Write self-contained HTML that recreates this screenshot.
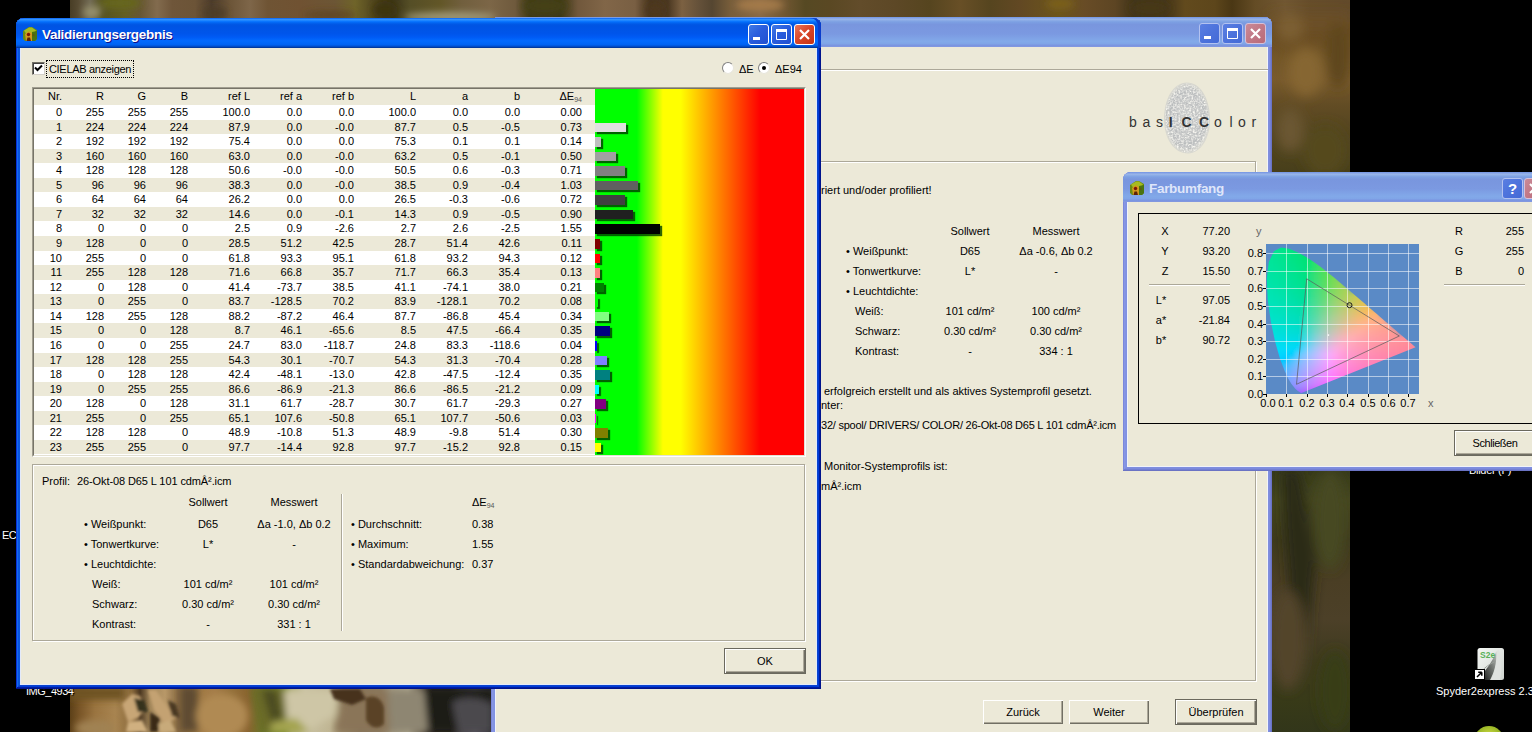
<!DOCTYPE html>
<html lang="de"><head><meta charset="utf-8"><title>Validierungsergebnis</title>
<style>
html,body{margin:0;padding:0}
body{width:1532px;height:732px;overflow:hidden;background:#000;position:relative;font-family:"Liberation Sans","DejaVu Sans",sans-serif;font-size:11px;color:#000;line-height:14px}
.abs{position:absolute}
div{box-sizing:border-box}
.t{position:absolute;white-space:nowrap;line-height:14px;height:14px}
.tc{position:absolute;white-space:nowrap;line-height:14px;height:14px;width:120px;text-align:center}
.c{position:absolute;width:60px;text-align:right;white-space:nowrap;line-height:16px;height:16px}
.sub{font-size:7px;color:#555;position:relative;top:2px}
.bar{box-shadow:2px 2px 1px rgba(0,60,0,.8)}
.win{position:absolute;background:#ece9d8;border-radius:8px 8px 0 0}
.win.act{box-shadow:inset -1px -1px #00138c,inset 1px 1px #0831d9,inset -2px -2px #001ea0,inset 2px 2px #166aee,inset -3px -3px #003bda,inset 3px 3px #0855dd,inset -4px -4px #0a44cf,inset 4px 4px #0b57e2,inset -5px -5px #e3eafb,inset 5px 0 #e3eafb}
.win.ina{box-shadow:inset -1px -1px #6a73c4,inset 1px 1px #7b88dc,inset -2px -2px #737fd3,inset 2px 2px #8796e4,inset -3px -3px #7d8bdd,inset 3px 3px #8393e2,inset -4px -4px #7f8ede,inset 4px 4px #8192e2,inset -5px -5px #f1f3fa,inset 5px 0 #f1f3fa}
.tb{position:absolute;left:0;top:0;right:0;height:30px;border-radius:8px 8px 0 0}
.act .tb{background:linear-gradient(180deg,#0058ee 0%,#3593ff 4%,#288eff 7%,#127dff 10%,#036ffc 13%,#0262ee 17%,#0057e5 22%,#0054e3 26%,#0055eb 52%,#005bf5 64%,#026afe 76%,#0064f4 88%,#0052d6 94%,#0040ab 97%,#003092 100%)}
.act .tb{box-shadow:inset -3px 0 0 #0a3ccc}
.ina .tb{background:linear-gradient(180deg,#7697e7,#7e9ee3 3%,#94afe8 6%,#97b4e9 8%,#82a5e4 14%,#7c9fe2 17%,#7996de 25%,#7b99e1 56%,#82a9e9 81%,#80a5e7 89%,#7b96e1 94%,#7a93df 97%,#8a9ce0)}
.ttl{position:absolute;top:9px;font-weight:bold;font-size:13.5px;line-height:16px;color:#fff;white-space:nowrap;text-shadow:1px 1px #0f1089;letter-spacing:-.3px}
.ina .ttl{color:#dfe6fa;text-shadow:none}
.wb{position:absolute;width:21px;height:21px;border:1px solid #fff;border-radius:3px;background:linear-gradient(135deg,#3f7ae6 0%,#2a5ddd 45%,#2150d0 100%)}
.wb.x{background:linear-gradient(135deg,#e9765a 0%,#d9472a 45%,#c43214 100%)}
.ina .wb{border-color:#b3c2f0;background:linear-gradient(135deg,#5a7fe2 0%,#4d73dc 50%,#446ad6 100%)}
.ina .wb.x{background:linear-gradient(135deg,#c98a98 0%,#c17886 50%,#b96a78 100%);border-color:#d6c0d8}
.wb svg{position:absolute;left:0;top:0}
.btn{position:absolute;background:#ece9d8;box-shadow:inset 1px 1px 0 #fff,inset -1px -1px 0 #716f64,inset -2px -2px 0 #aca899;text-align:center;line-height:24px;height:24px;width:80px}
.btn.def{border:1px solid #6b695e;box-shadow:inset 1px 1px 0 #fff,inset -1px -1px 0 #716f64,inset -2px -2px 0 #aca899;line-height:24px;height:26px;width:82px}
.grp{position:absolute;border:1px solid #aca899;box-shadow:1px 1px 0 #fff,inset 1px 1px 0 #fff}
.dl{position:absolute;color:#fff;white-space:nowrap;line-height:14px;text-shadow:1px 1px 1px #000}
.tk{line-height:14px;white-space:nowrap;font-size:11px}
</style></head><body>

<!-- ===== desktop photo ===== -->
<svg class="abs" style="left:70px;top:0" width="1280" height="732" viewBox="70 0 1280 732">
<defs><linearGradient id="gT" gradientUnits="userSpaceOnUse" x1="70" y1="0" x2="1350" y2="0"><stop offset="0.0000" stop-color="#483d25"/><stop offset="0.0063" stop-color="#564a32"/><stop offset="0.0156" stop-color="#716a54"/><stop offset="0.0250" stop-color="#555120"/><stop offset="0.0430" stop-color="#635e24"/><stop offset="0.0547" stop-color="#675635"/><stop offset="0.0680" stop-color="#826b4e"/><stop offset="0.0797" stop-color="#6f563a"/><stop offset="0.0977" stop-color="#6c5437"/><stop offset="0.1109" stop-color="#4c3c2b"/><stop offset="0.1250" stop-color="#6c5538"/><stop offset="0.1406" stop-color="#7e6649"/><stop offset="0.1547" stop-color="#6f5434"/><stop offset="0.1797" stop-color="#705232"/><stop offset="0.2070" stop-color="#6c5635"/><stop offset="0.2227" stop-color="#6f6429"/><stop offset="0.2422" stop-color="#483d1b"/><stop offset="0.2516" stop-color="#3b3418"/><stop offset="0.2656" stop-color="#554e26"/><stop offset="0.2891" stop-color="#625627"/><stop offset="0.3063" stop-color="#715f3e"/><stop offset="0.3281" stop-color="#7c6647"/><stop offset="0.3477" stop-color="#6f5a3d"/><stop offset="0.3594" stop-color="#3e3916"/><stop offset="0.3828" stop-color="#3b3715"/><stop offset="0.3969" stop-color="#71583c"/><stop offset="0.4180" stop-color="#816648"/><stop offset="0.4414" stop-color="#795f43"/><stop offset="0.4531" stop-color="#48351e"/><stop offset="0.4672" stop-color="#4b3821"/><stop offset="0.4781" stop-color="#7c6142"/><stop offset="0.4922" stop-color="#635039"/><stop offset="0.5016" stop-color="#554631"/><stop offset="0.5156" stop-color="#775d3a"/><stop offset="0.5391" stop-color="#876845"/><stop offset="0.5586" stop-color="#6f5631"/><stop offset="0.5742" stop-color="#564923"/><stop offset="0.5938" stop-color="#5a4823"/><stop offset="0.6172" stop-color="#624c2a"/><stop offset="0.6445" stop-color="#5d4826"/><stop offset="0.6719" stop-color="#56451f"/><stop offset="0.6953" stop-color="#684f26"/><stop offset="0.7188" stop-color="#56451f"/><stop offset="0.7422" stop-color="#624823"/><stop offset="0.7719" stop-color="#6c551c"/><stop offset="0.7930" stop-color="#684c26"/><stop offset="0.8164" stop-color="#5d4523"/><stop offset="0.8320" stop-color="#403419"/><stop offset="0.8555" stop-color="#443519"/><stop offset="0.8711" stop-color="#624a1d"/><stop offset="0.8945" stop-color="#5d461b"/><stop offset="0.9078" stop-color="#4a3714"/><stop offset="0.9258" stop-color="#644c25"/><stop offset="0.9492" stop-color="#715732"/><stop offset="0.9688" stop-color="#664d2a"/><stop offset="1.0000" stop-color="#624a2a"/></linearGradient><linearGradient id="gB" gradientUnits="userSpaceOnUse" x1="70" y1="0" x2="495" y2="0"><stop offset="0.0000" stop-color="#5c4018"/><stop offset="0.0235" stop-color="#7a5628"/><stop offset="0.0588" stop-color="#9a7440"/><stop offset="0.1059" stop-color="#a88450"/><stop offset="0.1459" stop-color="#8a6a3c"/><stop offset="0.1647" stop-color="#4a3620"/><stop offset="0.1882" stop-color="#a08458"/><stop offset="0.2235" stop-color="#b89868"/><stop offset="0.2541" stop-color="#8a6c44"/><stop offset="0.2824" stop-color="#a07a44"/><stop offset="0.3412" stop-color="#a47c48"/><stop offset="0.3812" stop-color="#94703a"/><stop offset="0.4188" stop-color="#8a6430"/><stop offset="0.4518" stop-color="#6a7428"/><stop offset="0.5035" stop-color="#7a8a30"/><stop offset="0.5224" stop-color="#a8a870"/><stop offset="0.5529" stop-color="#c8c0a0"/><stop offset="0.6118" stop-color="#c0b694"/><stop offset="0.6400" stop-color="#9a8a68"/><stop offset="0.6824" stop-color="#86745a"/><stop offset="0.7294" stop-color="#8a7a60"/><stop offset="0.7576" stop-color="#a69c82"/><stop offset="0.7953" stop-color="#b0a890"/><stop offset="0.8235" stop-color="#6a6050"/><stop offset="0.8424" stop-color="#2e2822"/><stop offset="0.8941" stop-color="#2a2420"/><stop offset="0.9224" stop-color="#4a464a"/><stop offset="0.9529" stop-color="#5a5860"/><stop offset="0.9835" stop-color="#3a3840"/><stop offset="1.0000" stop-color="#2a2830"/></linearGradient>
<linearGradient id="gR1" gradientUnits="userSpaceOnUse" x1="0" y1="0" x2="0" y2="180"><stop offset="0.0000" stop-color="#6a4e28"/><stop offset="0.1667" stop-color="#66491f"/><stop offset="0.3333" stop-color="#745728"/><stop offset="0.4444" stop-color="#785a2c"/><stop offset="0.5833" stop-color="#624c24"/><stop offset="0.7500" stop-color="#52441f"/><stop offset="0.8889" stop-color="#4c421c"/><stop offset="1.0000" stop-color="#443c1a"/></linearGradient>
<linearGradient id="gR2" gradientUnits="userSpaceOnUse" x1="0" y1="465" x2="0" y2="732"><stop offset="0.0000" stop-color="#34381a"/><stop offset="0.1311" stop-color="#44461e"/><stop offset="0.2809" stop-color="#3e3a1c"/><stop offset="0.4307" stop-color="#4a3e24"/><stop offset="0.5805" stop-color="#4c4028"/><stop offset="0.7303" stop-color="#3e3a1e"/><stop offset="0.8801" stop-color="#383a18"/><stop offset="1.0000" stop-color="#32361a"/></linearGradient>
<filter id="pb" x="-30%" y="-30%" width="160%" height="160%"><feGaussianBlur stdDeviation="6"/></filter>
<filter id="pb2" x="-30%" y="-30%" width="160%" height="160%"><feGaussianBlur stdDeviation="1.6"/></filter>
<filter id="pb3" x="-30%" y="-30%" width="160%" height="160%"><feGaussianBlur stdDeviation="3.5"/></filter>
</defs>
<rect x="70" y="0" width="1280" height="732" fill="#6a5428"/>
<rect x="1262" y="0" width="88" height="185" fill="url(#gR1)"/>
<rect x="70" y="0" width="1280" height="22" fill="url(#gT)"/>
<g filter="url(#pb3)">
<ellipse cx="215" cy="13" rx="12" ry="6" fill="#4e3c26"/>
<ellipse cx="120" cy="3" rx="22" ry="6" fill="#66661e"/>
<ellipse cx="92" cy="12" rx="9" ry="6" fill="#96906c"/>
<ellipse cx="450" cy="17" rx="46" ry="5" fill="#a09a78"/>
<ellipse cx="545" cy="6" rx="22" ry="9" fill="#444012"/>
<ellipse cx="760" cy="5" rx="24" ry="6" fill="#a47a4a"/>
<ellipse cx="655" cy="10" rx="9" ry="8" fill="#4e381c"/>
<ellipse cx="1150" cy="8" rx="20" ry="8" fill="#463818"/>
<ellipse cx="1060" cy="4" rx="14" ry="5" fill="#7c601c"/>
<ellipse cx="330" cy="15" rx="26" ry="4" fill="#5e4424"/>
<ellipse cx="385" cy="10" rx="12" ry="9" fill="#3e3610"/>
</g>
<g filter="url(#pb)">
<rect x="1270" y="14" width="80" height="20" fill="#6c5028"/>
<ellipse cx="1306" cy="72" rx="18" ry="24" fill="#866632"/>
<ellipse cx="1290" cy="28" rx="14" ry="14" fill="#7c5e32"/>
<ellipse cx="1338" cy="55" rx="12" ry="34" fill="#5e461a"/>
<ellipse cx="1290" cy="130" rx="14" ry="22" fill="#6a5630"/>
<ellipse cx="1325" cy="150" rx="22" ry="26" fill="#544a1c"/>
</g>
<rect x="1262" y="465" width="88" height="267" fill="url(#gR2)"/>
<g filter="url(#pb)">
<path d="M1282 470 L1300 470 L1316 560 L1308 640 L1290 600 L1284 520Z" fill="#2c2a14"/>
<ellipse cx="1330" cy="520" rx="16" ry="50" fill="#464a20"/>
<ellipse cx="1288" cy="640" rx="18" ry="50" fill="#52442c"/>
<ellipse cx="1335" cy="690" rx="16" ry="40" fill="#383c18"/>
</g>
<rect x="70" y="684" width="425" height="48" fill="url(#gB)"/>
<g filter="url(#pb3)">
<rect x="70" y="686" width="55" height="14" fill="#6e5222"/>
<ellipse cx="95" cy="728" rx="20" ry="8" fill="#a08252"/>
<rect x="180" y="686" width="18" height="46" fill="#5e4c30"/>
<ellipse cx="222" cy="716" rx="26" ry="22" fill="#b08a52"/>
<path d="M250 688h34l4 44h-26z" fill="#6a6a28"/>
<path d="M262 690l14 0 8 40h-10z" fill="#4c4c22"/>
<path d="M284 690h56l-6 26 -30 16h-16z" fill="#cec6a6"/>
<path d="M272 722l24 -4 14 14h-40z" fill="#a4a450"/>
<path d="M336 690h52l2 42h-56l8-22z" fill="#8a7458"/>
<path d="M388 690l36 0 4 42h-38z" fill="#8e8672"/>
<path d="M424 688h71v44h-66z" fill="#1c1a18"/>
<path d="M452 702c12-6 26-6 40 2v28h-34z" fill="#4c4a4e"/>
</g>
<g filter="url(#pb2)">
<path d="M122 704l10-10 8 2 6 12 -8 10 -10 4z" fill="#c8a676"/>
<path d="M134 698l10 2 4 12 -10 0z" fill="#34301a"/>
<path d="M148 690l8 0 12 18 8 10 -10 6 -12 -14z" fill="#c4a272"/>
<path d="M128 722l14 -2 6 12h-22z" fill="#d0b080"/>
<path d="M150 712l10 6 -2 14h-8z" fill="#3a2a18"/>
<path d="M158 724l12 -4 6 12h-16z" fill="#c8aa7a"/>
<path d="M168 700l8 4 4 14 -8 -2z" fill="#4a3822"/>
<path d="M330 689l30 0 6 10 -14 6 -18 -6z" fill="#46321e"/>
<path d="M366 698c8-4 16 0 18 10l0 16c-6 6-14 4-18-4z" fill="#5a4226"/>
</g>
</svg>

<!-- desktop labels / icons -->
<div class="dl" style="left:2px;top:528px;letter-spacing:-.6px">EC</div>
<div class="dl" style="left:26px;top:684px;letter-spacing:-.5px">IMG_4934</div>
<div class="dl" style="left:1469px;top:463px;letter-spacing:-.3px">Bilder (F)</div>
<div class="dl" style="left:1436px;top:684px">Spyder2express 2.3</div>
<svg class="abs" style="left:1472px;top:646px" width="34" height="36" viewBox="0 0 34 36">
 <defs><linearGradient id="sp1" x1="0" y1="0" x2="1" y2="1"><stop offset="0" stop-color="#f4f7f4"/><stop offset="1" stop-color="#cfd4cf"/></linearGradient>
 <linearGradient id="sp2" x1="0" y1="1" x2="1" y2="0"><stop offset="0" stop-color="#0c0c0c"/><stop offset=".55" stop-color="#6c706c"/><stop offset="1" stop-color="#c4c8c4"/></linearGradient></defs>
 <rect x="5.5" y="2" width="26.5" height="32" rx="2.5" fill="url(#sp1)"/>
 <path d="M8 34C12 24 20 18 24.5 5 25 17 22 27 18 34z" fill="url(#sp2)"/>
 <path d="M24.5 5C25.5 16 23 27 19 34h9c2-8 2-20-1-30z" fill="#dfe2df"/>
 <path d="M9 26c4-5 9-8 13-10" stroke="#9aa09a" stroke-width="1" fill="none"/>
 <text x="8" y="12" font-family="Liberation Sans,sans-serif" font-size="8.5" font-weight="bold" fill="#58b058">S2e</text>
 <rect x="2.5" y="23.5" width="10" height="10" fill="#fff" stroke="#000" stroke-width="1"/>
 <path d="M5 31l4.5-4.5M9.8 26.2h-3.6M9.8 26.2v3.6" stroke="#000" stroke-width="1.5" fill="none"/>
</svg>
<div class="abs" style="left:1474px;top:726px;width:30px;height:16px;border-radius:15px 15px 0 0;background:radial-gradient(circle at 50% 70%,#d6e048,#96b424 65%,#6a8a14)"></div>

<!-- ===== middle window (inactive) ===== -->
<div class="win ina" id="w2" style="left:491px;top:17px;width:781px;height:760px">
 <div class="tb"></div>
 <div class="wb" style="left:708px;top:6px"><svg width="19" height="19"><rect x="4" y="12" width="7" height="3" fill="#fff"/></svg></div>
 <div class="wb" style="left:731px;top:6px"><svg width="19" height="19"><path d="M4.5 5.5h10v9h-10z M4.5 4.5h10" stroke="#fff" stroke-width="1" fill="none"/><rect x="4" y="4" width="11" height="3" fill="#fff"/></svg></div>
 <div class="wb x" style="left:754px;top:6px"><svg width="19" height="19"><path d="M5 5l9 9M14 5l-9 9" stroke="#fff" stroke-width="2.2"/></svg></div>
 <!-- separator line -->
 <div class="abs" style="left:4px;top:52px;width:773px;height:2px;border-top:1px solid #aca899;border-bottom:1px solid #fff"></div>
 <!-- logo -->
 <svg class="abs" style="left:668px;top:62px" width="56" height="78" viewBox="0 0 56 78">
  <defs><radialGradient id="fp" cx="50%" cy="50%" r="50%"><stop offset="0" stop-color="#cccdcc"/><stop offset=".8" stop-color="#bfc1c2"/><stop offset="1" stop-color="#c6c8c8" stop-opacity=".5"/></radialGradient>
  <filter id="fpn" x="0" y="0" width="100%" height="100%"><feTurbulence type="fractalNoise" baseFrequency=".55" numOctaves="2" seed="4" result="n"/><feColorMatrix in="n" type="matrix" values="0 0 0 0 .95  0 0 0 0 .94  0 0 0 0 .89  2.4 0 0 0 -.95"/><feComposite in2="SourceGraphic" operator="in"/></filter></defs>
  <path d="M28 3.5C41 3.5 50 18 51 38 52 58 42 74.5 29 74.5 15 74.5 5 60 5 40 5 20 14 3.5 28 3.5z" fill="url(#fp)"/>
  <g fill="none" stroke="#b4b7b9" stroke-width=".8" opacity=".75">
   <ellipse cx="28" cy="40" rx="3" ry="5"/><ellipse cx="28" cy="40" rx="6.5" ry="10"/><ellipse cx="28" cy="40" rx="10" ry="15.5"/><ellipse cx="28" cy="39.5" rx="13.5" ry="21"/><ellipse cx="28" cy="39" rx="17" ry="26"/><ellipse cx="28" cy="39" rx="20.5" ry="31"/>
  </g>
  <path d="M28 4.5C40 4.5 49 18 50 38 51 57 42 73.5 29 73.5 16 73.5 6 60 6 40 6 20 15 4.5 28 4.5z" fill="#000" filter="url(#fpn)"/>
 </svg>
 <svg class="abs" style="left:630px;top:90px" width="150" height="30" viewBox="1121 107 150 30"><text y="127" font-family="Liberation Sans,sans-serif" font-size="14" fill="#333"><tspan x="1129 1142.5 1156">bas</tspan><tspan font-weight="bold" x="1168.7 1181.5 1199">ICC</tspan><tspan x="1214 1229.4 1238 1251.5">olor</tspan></text></svg>
 <!-- group box -->
 <div class="grp" style="left:-40px;top:144px;width:805px;height:520px"></div>
 <div class="t" style="left:330px;top:166px">riert und/oder profiliert!</div>
 <div class="tc" style="left:419px;top:207px">Sollwert</div><div class="tc" style="left:505px;top:207px">Messwert</div>
 <div class="t" style="left:355px;top:227px">• Weißpunkt:</div><div class="tc" style="left:419px;top:227px">D65</div><div class="tc" style="left:505px;top:227px">Δa -0.6, Δb 0.2</div>
 <div class="t" style="left:355px;top:247px">• Tonwertkurve:</div><div class="tc" style="left:419px;top:247px">L*</div><div class="tc" style="left:505px;top:247px">-</div>
 <div class="t" style="left:355px;top:267px">• Leuchtdichte:</div>
 <div class="t" style="left:364px;top:287px">Weiß:</div><div class="tc" style="left:419px;top:287px">101 cd/m²</div><div class="tc" style="left:505px;top:287px">100 cd/m²</div>
 <div class="t" style="left:364px;top:307px">Schwarz:</div><div class="tc" style="left:419px;top:307px">0.30 cd/m²</div><div class="tc" style="left:505px;top:307px">0.30 cd/m²</div>
 <div class="t" style="left:364px;top:327px">Kontrast:</div><div class="tc" style="left:419px;top:327px">-</div><div class="tc" style="left:505px;top:327px">334 : 1</div>
 <div class="t" style="left:333px;top:367px">erfolgreich erstellt und als aktives Systemprofil gesetzt.</div>
 <div class="t" style="left:330px;top:381px">nter:</div>
 <div class="t" style="left:330px;top:401px;letter-spacing:-.24px">32/ spool/ DRIVERS/ COLOR/ 26-Okt-08 D65 L 101 cdmÂ².icm</div>
 <div class="t" style="left:333px;top:442px">Monitor-Systemprofils ist:</div>
 <div class="t" style="left:330px;top:462px">mÂ².icm</div>
 <div class="btn" style="left:492px;top:683px">Zurück</div>
 <div class="btn" style="left:578px;top:683px">Weiter</div>
 <div class="btn def" style="left:684px;top:682px">Überprüfen</div>
</div>

<!-- ===== Farbumfang window (inactive) ===== -->
<div class="win ina" id="w3" style="left:1123px;top:172px;width:430px;height:299px">
 <div class="tb"></div>
 <svg class="abs" style="left:6px;top:8px" width="16" height="16" viewBox="0 0 16 16"><path d="M1 5l6-4h3l5 3v9l-2 2H3l-2-2z" fill="#6a8c14"/><path d="M2 4.5l5-3h3l4 3-2 3H4z" fill="#a6bc22"/><path d="M10 6l5-1v8l-2 2h-3z" fill="#4a7410"/><path d="M3 8l4-3 3 2v8H4z" fill="#d29a1e"/><circle cx="6.5" cy="8.5" r="1.7" fill="#7c1608"/><path d="M4.5 15l1-3.5h2.5l1 3.5z" fill="#5e2406"/><circle cx="11.5" cy="9" r="1.2" fill="#5a5a10"/></svg>
 <div class="ttl" style="left:26px">Farbumfang</div>
 <div class="wb" style="left:379px;top:6px"><svg width="19" height="19"><text x="9.5" y="15" text-anchor="middle" font-family="Liberation Sans,sans-serif" font-size="15" font-weight="bold" fill="#fff">?</text></svg></div>
 <div class="wb x" style="left:401px;top:6px"><svg width="19" height="19"><path d="M5 5l9 9M14 5l-9 9" stroke="#fff" stroke-width="2.2"/></svg></div>
 <!-- inner black frame -->
 <div class="abs" style="left:15px;top:41px;width:430px;height:211px;border:1px solid #000"></div>
 <div class="tc" style="left:-18px;top:52px">X</div><div class="c" style="left:47px;top:51px">77.20</div>
 <div class="tc" style="left:-18px;top:72px">Y</div><div class="c" style="left:47px;top:71px">93.20</div>
 <div class="tc" style="left:-18px;top:92px">Z</div><div class="c" style="left:47px;top:91px">15.50</div>
 <div class="abs" style="left:26px;top:112px;width:81px;height:2px;border-top:1px solid #aca899;border-bottom:1px solid #fff"></div>
 <div class="tc" style="left:-22px;top:121px">L*</div><div class="c" style="left:47px;top:120px">97.05</div>
 <div class="tc" style="left:-22px;top:141px">a*</div><div class="c" style="left:47px;top:140px">-21.84</div>
 <div class="tc" style="left:-22px;top:161px">b*</div><div class="c" style="left:47px;top:160px">90.72</div>
 <div class="tc" style="left:276px;top:52px">R</div><div class="c" style="left:341px;top:51px">255</div>
 <div class="tc" style="left:276px;top:72px">G</div><div class="c" style="left:341px;top:71px">255</div>
 <div class="tc" style="left:276px;top:92px">B</div><div class="c" style="left:341px;top:91px">0</div>
 <div class="abs" style="left:321px;top:112px;width:81px;height:2px;border-top:1px solid #aca899;border-bottom:1px solid #fff"></div>
 <div class="t" style="left:133px;top:52px;color:#666">y</div>
 <div class="t" style="left:305px;top:224px;color:#666">x</div>
<svg class="abs" style="left:143px;top:72px" width="153" height="150" viewBox="0 0 153 150">
<defs><clipPath id="hs"><path d="M35.4 149.1 L35.3 149.2 L34.9 149.1 L33.5 148.1 L31.9 146.9 L29.3 144.8 L25.3 139.8 L22.3 134.7 L18.6 126.7 L14.0 114.7 L9.2 98.1 L4.8 77.4 L1.7 55.3 L0.8 34.8 L2.8 18.1 L7.9 7.2 L15.1 3.4 L23.2 4.7 L31.5 8.3 L39.3 12.5 L46.7 17.3 L54.1 22.6 L61.4 28.2 L68.7 34.1 L76.0 40.2 L83.2 46.3 L90.4 52.4 L97.5 58.5 L104.3 64.4 L110.9 70.1 L117.1 75.4 L122.7 80.3 L127.6 84.5 L135.5 91.3 L140.8 95.8 L144.1 98.6 L146.4 100.6 L147.8 101.8 L149.6 103.3Z"/></clipPath><filter id="bl" x="-10%" y="-10%" width="120%" height="120%"><feGaussianBlur stdDeviation="2.2"/></filter></defs>
<rect width="153" height="150" fill="#5a8ac6"/>
<g clip-path="url(#hs)"><g filter="url(#bl)">
<rect x="-6" y="-6" width="6" height="6" fill="#00e590"/>
<rect x="0" y="-6" width="6" height="6" fill="#00e58e"/>
<rect x="6" y="-6" width="6" height="6" fill="#00e58a"/>
<rect x="12" y="-6" width="6" height="6" fill="#00e485"/>
<rect x="18" y="-6" width="6" height="6" fill="#00e480"/>
<rect x="24" y="-6" width="6" height="6" fill="#00e47a"/>
<rect x="-6" y="0" width="6" height="6" fill="#00e594"/>
<rect x="0" y="0" width="6" height="6" fill="#00e592"/>
<rect x="6" y="0" width="6" height="6" fill="#00e58d"/>
<rect x="12" y="0" width="6" height="6" fill="#00e489"/>
<rect x="18" y="0" width="6" height="6" fill="#00e483"/>
<rect x="24" y="0" width="6" height="6" fill="#00e47d"/>
<rect x="30" y="0" width="6" height="6" fill="#00e376"/>
<rect x="-6" y="6" width="6" height="6" fill="#00e597"/>
<rect x="0" y="6" width="6" height="6" fill="#00e595"/>
<rect x="6" y="6" width="6" height="6" fill="#00e591"/>
<rect x="12" y="6" width="6" height="6" fill="#00e48c"/>
<rect x="18" y="6" width="6" height="6" fill="#00e487"/>
<rect x="24" y="6" width="6" height="6" fill="#00e381"/>
<rect x="30" y="6" width="6" height="6" fill="#00e37a"/>
<rect x="36" y="6" width="6" height="6" fill="#00e372"/>
<rect x="-6" y="12" width="6" height="6" fill="#00e59a"/>
<rect x="0" y="12" width="6" height="6" fill="#00e599"/>
<rect x="6" y="12" width="6" height="6" fill="#00e495"/>
<rect x="12" y="12" width="6" height="6" fill="#00e490"/>
<rect x="18" y="12" width="6" height="6" fill="#00e48b"/>
<rect x="24" y="12" width="6" height="6" fill="#00e385"/>
<rect x="30" y="12" width="6" height="6" fill="#00e37e"/>
<rect x="36" y="12" width="6" height="6" fill="#00e277"/>
<rect x="42" y="12" width="6" height="6" fill="#0fe26d"/>
<rect x="48" y="12" width="6" height="6" fill="#30e261"/>
<rect x="-6" y="18" width="6" height="6" fill="#00e59e"/>
<rect x="0" y="18" width="6" height="6" fill="#00e59c"/>
<rect x="6" y="18" width="6" height="6" fill="#00e499"/>
<rect x="12" y="18" width="6" height="6" fill="#00e494"/>
<rect x="18" y="18" width="6" height="6" fill="#00e38f"/>
<rect x="24" y="18" width="6" height="6" fill="#00e389"/>
<rect x="30" y="18" width="6" height="6" fill="#00e383"/>
<rect x="36" y="18" width="6" height="6" fill="#00e27b"/>
<rect x="42" y="18" width="6" height="6" fill="#17e272"/>
<rect x="48" y="18" width="6" height="6" fill="#34e166"/>
<rect x="54" y="18" width="6" height="6" fill="#46e157"/>
<rect x="-6" y="24" width="6" height="6" fill="#00e5a2"/>
<rect x="0" y="24" width="6" height="6" fill="#00e4a0"/>
<rect x="6" y="24" width="6" height="6" fill="#00e49d"/>
<rect x="12" y="24" width="6" height="6" fill="#00e498"/>
<rect x="18" y="24" width="6" height="6" fill="#00e393"/>
<rect x="24" y="24" width="6" height="6" fill="#00e38e"/>
<rect x="30" y="24" width="6" height="6" fill="#00e287"/>
<rect x="36" y="24" width="6" height="6" fill="#00e280"/>
<rect x="42" y="24" width="6" height="6" fill="#1ee177"/>
<rect x="48" y="24" width="6" height="6" fill="#38e16b"/>
<rect x="54" y="24" width="6" height="6" fill="#4ae05c"/>
<rect x="60" y="24" width="6" height="6" fill="#60de50"/>
<rect x="-6" y="30" width="6" height="6" fill="#00e5a6"/>
<rect x="0" y="30" width="6" height="6" fill="#00e4a5"/>
<rect x="6" y="30" width="6" height="6" fill="#00e4a1"/>
<rect x="12" y="30" width="6" height="6" fill="#00e39d"/>
<rect x="18" y="30" width="6" height="6" fill="#00e398"/>
<rect x="24" y="30" width="6" height="6" fill="#00e393"/>
<rect x="30" y="30" width="6" height="6" fill="#00e28c"/>
<rect x="36" y="30" width="6" height="6" fill="#00e185"/>
<rect x="42" y="30" width="6" height="6" fill="#23e17c"/>
<rect x="48" y="30" width="6" height="6" fill="#3ce071"/>
<rect x="54" y="30" width="6" height="6" fill="#4ee062"/>
<rect x="60" y="30" width="6" height="6" fill="#64de56"/>
<rect x="66" y="30" width="6" height="6" fill="#7bdb51"/>
<rect x="-6" y="36" width="6" height="6" fill="#00e4ab"/>
<rect x="0" y="36" width="6" height="6" fill="#00e4a9"/>
<rect x="6" y="36" width="6" height="6" fill="#00e4a5"/>
<rect x="12" y="36" width="6" height="6" fill="#00e3a1"/>
<rect x="18" y="36" width="6" height="6" fill="#00e39d"/>
<rect x="24" y="36" width="6" height="6" fill="#00e298"/>
<rect x="30" y="36" width="6" height="6" fill="#00e291"/>
<rect x="36" y="36" width="6" height="6" fill="#00e18a"/>
<rect x="42" y="36" width="6" height="6" fill="#28e081"/>
<rect x="48" y="36" width="6" height="6" fill="#40e077"/>
<rect x="54" y="36" width="6" height="6" fill="#52df68"/>
<rect x="60" y="36" width="6" height="6" fill="#68dd5b"/>
<rect x="66" y="36" width="6" height="6" fill="#80da57"/>
<rect x="72" y="36" width="6" height="6" fill="#93d752"/>
<rect x="-6" y="42" width="6" height="6" fill="#00e4af"/>
<rect x="0" y="42" width="6" height="6" fill="#00e4ae"/>
<rect x="6" y="42" width="6" height="6" fill="#00e3aa"/>
<rect x="12" y="42" width="6" height="6" fill="#00e3a6"/>
<rect x="18" y="42" width="6" height="6" fill="#00e2a2"/>
<rect x="24" y="42" width="6" height="6" fill="#00e29d"/>
<rect x="30" y="42" width="6" height="6" fill="#00e197"/>
<rect x="36" y="42" width="6" height="6" fill="#00e190"/>
<rect x="42" y="42" width="6" height="6" fill="#2de088"/>
<rect x="48" y="42" width="6" height="6" fill="#45df7d"/>
<rect x="54" y="42" width="6" height="6" fill="#57de6f"/>
<rect x="60" y="42" width="6" height="6" fill="#6ddc62"/>
<rect x="66" y="42" width="6" height="6" fill="#85d95d"/>
<rect x="72" y="42" width="6" height="6" fill="#99d658"/>
<rect x="78" y="42" width="6" height="6" fill="#a9d254"/>
<rect x="-6" y="48" width="6" height="6" fill="#00e4b4"/>
<rect x="0" y="48" width="6" height="6" fill="#00e4b3"/>
<rect x="6" y="48" width="6" height="6" fill="#00e3b0"/>
<rect x="12" y="48" width="6" height="6" fill="#00e3ac"/>
<rect x="18" y="48" width="6" height="6" fill="#00e2a8"/>
<rect x="24" y="48" width="6" height="6" fill="#00e1a3"/>
<rect x="30" y="48" width="6" height="6" fill="#00e19d"/>
<rect x="36" y="48" width="6" height="6" fill="#00e096"/>
<rect x="42" y="48" width="6" height="6" fill="#32df8e"/>
<rect x="48" y="48" width="6" height="6" fill="#49de84"/>
<rect x="54" y="48" width="6" height="6" fill="#5cdd76"/>
<rect x="60" y="48" width="6" height="6" fill="#75db6c"/>
<rect x="66" y="48" width="6" height="6" fill="#8cd865"/>
<rect x="72" y="48" width="6" height="6" fill="#9fd45f"/>
<rect x="78" y="48" width="6" height="6" fill="#b0d05a"/>
<rect x="84" y="48" width="6" height="6" fill="#becd55"/>
<rect x="90" y="48" width="6" height="6" fill="#cbc950"/>
<rect x="-6" y="54" width="6" height="6" fill="#00e4b9"/>
<rect x="0" y="54" width="6" height="6" fill="#00e4b8"/>
<rect x="6" y="54" width="6" height="6" fill="#00e3b5"/>
<rect x="12" y="54" width="6" height="6" fill="#00e2b2"/>
<rect x="18" y="54" width="6" height="6" fill="#00e2ae"/>
<rect x="24" y="54" width="6" height="6" fill="#00e1a9"/>
<rect x="30" y="54" width="6" height="6" fill="#00e0a4"/>
<rect x="36" y="54" width="6" height="6" fill="#00e09d"/>
<rect x="42" y="54" width="6" height="6" fill="#37df95"/>
<rect x="48" y="54" width="6" height="6" fill="#4ede8b"/>
<rect x="54" y="54" width="6" height="6" fill="#62dc7f"/>
<rect x="60" y="54" width="6" height="6" fill="#7ed978"/>
<rect x="66" y="54" width="6" height="6" fill="#95d570"/>
<rect x="72" y="54" width="6" height="6" fill="#a7d269"/>
<rect x="78" y="54" width="6" height="6" fill="#b8ce61"/>
<rect x="84" y="54" width="6" height="6" fill="#c7ca5c"/>
<rect x="90" y="54" width="6" height="6" fill="#d4c757"/>
<rect x="96" y="54" width="6" height="6" fill="#dfc351"/>
<rect x="-6" y="60" width="6" height="6" fill="#00e4bf"/>
<rect x="0" y="60" width="6" height="6" fill="#00e3be"/>
<rect x="6" y="60" width="6" height="6" fill="#00e3bb"/>
<rect x="12" y="60" width="6" height="6" fill="#00e2b8"/>
<rect x="18" y="60" width="6" height="6" fill="#00e1b4"/>
<rect x="24" y="60" width="6" height="6" fill="#00e1b0"/>
<rect x="30" y="60" width="6" height="6" fill="#00e0ab"/>
<rect x="36" y="60" width="6" height="6" fill="#15dfa5"/>
<rect x="42" y="60" width="6" height="6" fill="#3dde9d"/>
<rect x="48" y="60" width="6" height="6" fill="#54dd94"/>
<rect x="54" y="60" width="6" height="6" fill="#6dda8a"/>
<rect x="60" y="60" width="6" height="6" fill="#88d783"/>
<rect x="66" y="60" width="6" height="6" fill="#9ed37c"/>
<rect x="72" y="60" width="6" height="6" fill="#b1cf75"/>
<rect x="78" y="60" width="6" height="6" fill="#c1cb6d"/>
<rect x="84" y="60" width="6" height="6" fill="#d0c764"/>
<rect x="90" y="60" width="6" height="6" fill="#dec35e"/>
<rect x="96" y="60" width="6" height="6" fill="#e9bf58"/>
<rect x="102" y="60" width="6" height="6" fill="#f4bb53"/>
<rect x="-6" y="66" width="6" height="6" fill="#00e3c5"/>
<rect x="0" y="66" width="6" height="6" fill="#00e3c4"/>
<rect x="6" y="66" width="6" height="6" fill="#00e2c1"/>
<rect x="12" y="66" width="6" height="6" fill="#00e2be"/>
<rect x="18" y="66" width="6" height="6" fill="#00e1bb"/>
<rect x="24" y="66" width="6" height="6" fill="#00e0b7"/>
<rect x="30" y="66" width="6" height="6" fill="#00dfb3"/>
<rect x="36" y="66" width="6" height="6" fill="#1fdead"/>
<rect x="42" y="66" width="6" height="6" fill="#42dda6"/>
<rect x="48" y="66" width="6" height="6" fill="#5adb9d"/>
<rect x="54" y="66" width="6" height="6" fill="#78d896"/>
<rect x="60" y="66" width="6" height="6" fill="#92d48f"/>
<rect x="66" y="66" width="6" height="6" fill="#a8d089"/>
<rect x="72" y="66" width="6" height="6" fill="#bbcc81"/>
<rect x="78" y="66" width="6" height="6" fill="#cbc77a"/>
<rect x="84" y="66" width="6" height="6" fill="#dbc372"/>
<rect x="90" y="66" width="6" height="6" fill="#e9be69"/>
<rect x="96" y="66" width="6" height="6" fill="#f5ba62"/>
<rect x="102" y="66" width="6" height="6" fill="#fbb76b"/>
<rect x="108" y="66" width="6" height="6" fill="#ffb471"/>
<rect x="-6" y="72" width="6" height="6" fill="#00e3cc"/>
<rect x="0" y="72" width="6" height="6" fill="#00e3cb"/>
<rect x="6" y="72" width="6" height="6" fill="#00e2c8"/>
<rect x="12" y="72" width="6" height="6" fill="#00e1c6"/>
<rect x="18" y="72" width="6" height="6" fill="#00e0c3"/>
<rect x="24" y="72" width="6" height="6" fill="#00dfbf"/>
<rect x="30" y="72" width="6" height="6" fill="#00debb"/>
<rect x="36" y="72" width="6" height="6" fill="#26ddb6"/>
<rect x="42" y="72" width="6" height="6" fill="#48dcb0"/>
<rect x="48" y="72" width="6" height="6" fill="#61daa8"/>
<rect x="54" y="72" width="6" height="6" fill="#83d6a2"/>
<rect x="60" y="72" width="6" height="6" fill="#9dd19c"/>
<rect x="66" y="72" width="6" height="6" fill="#b3cd95"/>
<rect x="72" y="72" width="6" height="6" fill="#c5c88e"/>
<rect x="78" y="72" width="6" height="6" fill="#d6c387"/>
<rect x="84" y="72" width="6" height="6" fill="#e6be7f"/>
<rect x="90" y="72" width="6" height="6" fill="#f4b978"/>
<rect x="96" y="72" width="6" height="6" fill="#fbb67d"/>
<rect x="102" y="72" width="6" height="6" fill="#ffb381"/>
<rect x="108" y="72" width="6" height="6" fill="#ffae81"/>
<rect x="114" y="72" width="6" height="6" fill="#ffaa82"/>
<rect x="-6" y="78" width="6" height="6" fill="#00e3d3"/>
<rect x="0" y="78" width="6" height="6" fill="#00e2d2"/>
<rect x="6" y="78" width="6" height="6" fill="#00e2d0"/>
<rect x="12" y="78" width="6" height="6" fill="#00e1ce"/>
<rect x="18" y="78" width="6" height="6" fill="#00e0cb"/>
<rect x="24" y="78" width="6" height="6" fill="#00dfc8"/>
<rect x="30" y="78" width="6" height="6" fill="#00ddc5"/>
<rect x="36" y="78" width="6" height="6" fill="#2edcc1"/>
<rect x="42" y="78" width="6" height="6" fill="#4fdabb"/>
<rect x="48" y="78" width="6" height="6" fill="#6ed7b5"/>
<rect x="54" y="78" width="6" height="6" fill="#8fd2af"/>
<rect x="60" y="78" width="6" height="6" fill="#a9cea9"/>
<rect x="66" y="78" width="6" height="6" fill="#bec9a3"/>
<rect x="72" y="78" width="6" height="6" fill="#d1c39c"/>
<rect x="78" y="78" width="6" height="6" fill="#e3be95"/>
<rect x="84" y="78" width="6" height="6" fill="#f2b88d"/>
<rect x="90" y="78" width="6" height="6" fill="#fab58f"/>
<rect x="96" y="78" width="6" height="6" fill="#ffb290"/>
<rect x="102" y="78" width="6" height="6" fill="#ffac8f"/>
<rect x="108" y="78" width="6" height="6" fill="#ffa88e"/>
<rect x="114" y="78" width="6" height="6" fill="#ffa58c"/>
<rect x="120" y="78" width="6" height="6" fill="#ffa18b"/>
<rect x="-6" y="84" width="6" height="6" fill="#00e2db"/>
<rect x="0" y="84" width="6" height="6" fill="#00e2da"/>
<rect x="6" y="84" width="6" height="6" fill="#00e1d8"/>
<rect x="12" y="84" width="6" height="6" fill="#00e0d7"/>
<rect x="18" y="84" width="6" height="6" fill="#00dfd5"/>
<rect x="24" y="84" width="6" height="6" fill="#00ded3"/>
<rect x="30" y="84" width="6" height="6" fill="#00dcd0"/>
<rect x="36" y="84" width="6" height="6" fill="#36dacd"/>
<rect x="42" y="84" width="6" height="6" fill="#57d8c9"/>
<rect x="48" y="84" width="6" height="6" fill="#7cd4c3"/>
<rect x="54" y="84" width="6" height="6" fill="#9ccfbd"/>
<rect x="60" y="84" width="6" height="6" fill="#b5c9b7"/>
<rect x="66" y="84" width="6" height="6" fill="#cbc4b1"/>
<rect x="72" y="84" width="6" height="6" fill="#dfbeaa"/>
<rect x="78" y="84" width="6" height="6" fill="#f0b7a3"/>
<rect x="84" y="84" width="6" height="6" fill="#fab3a1"/>
<rect x="90" y="84" width="6" height="6" fill="#ffb0a0"/>
<rect x="96" y="84" width="6" height="6" fill="#ffab9d"/>
<rect x="102" y="84" width="6" height="6" fill="#ffa69a"/>
<rect x="108" y="84" width="6" height="6" fill="#ffa397"/>
<rect x="114" y="84" width="6" height="6" fill="#ff9f95"/>
<rect x="120" y="84" width="6" height="6" fill="#ff9d93"/>
<rect x="126" y="84" width="6" height="6" fill="#ff9a91"/>
<rect x="-6" y="90" width="6" height="6" fill="#00e2e3"/>
<rect x="0" y="90" width="6" height="6" fill="#00e2e3"/>
<rect x="6" y="90" width="6" height="6" fill="#00e1e2"/>
<rect x="12" y="90" width="6" height="6" fill="#00dfe1"/>
<rect x="18" y="90" width="6" height="6" fill="#00dee0"/>
<rect x="24" y="90" width="6" height="6" fill="#00dcde"/>
<rect x="30" y="90" width="6" height="6" fill="#00dbdd"/>
<rect x="36" y="90" width="6" height="6" fill="#3ed9db"/>
<rect x="42" y="90" width="6" height="6" fill="#60d6d8"/>
<rect x="48" y="90" width="6" height="6" fill="#8ad0d3"/>
<rect x="54" y="90" width="6" height="6" fill="#aacacd"/>
<rect x="60" y="90" width="6" height="6" fill="#c3c4c7"/>
<rect x="66" y="90" width="6" height="6" fill="#dabdc1"/>
<rect x="72" y="90" width="6" height="6" fill="#edb6ba"/>
<rect x="78" y="90" width="6" height="6" fill="#fab2b5"/>
<rect x="84" y="90" width="6" height="6" fill="#ffaeb1"/>
<rect x="90" y="90" width="6" height="6" fill="#ffa8ab"/>
<rect x="96" y="90" width="6" height="6" fill="#ffa4a6"/>
<rect x="102" y="90" width="6" height="6" fill="#ffa0a2"/>
<rect x="108" y="90" width="6" height="6" fill="#ff9d9f"/>
<rect x="114" y="90" width="6" height="6" fill="#ff9a9c"/>
<rect x="120" y="90" width="6" height="6" fill="#ff9899"/>
<rect x="126" y="90" width="6" height="6" fill="#ff9597"/>
<rect x="132" y="90" width="6" height="6" fill="#ff9395"/>
<rect x="138" y="90" width="6" height="6" fill="#ff9193"/>
<rect x="-6" y="96" width="6" height="6" fill="#00e2ed"/>
<rect x="0" y="96" width="6" height="6" fill="#00e1ed"/>
<rect x="6" y="96" width="6" height="6" fill="#00e0ec"/>
<rect x="12" y="96" width="6" height="6" fill="#00deec"/>
<rect x="18" y="96" width="6" height="6" fill="#00ddec"/>
<rect x="24" y="96" width="6" height="6" fill="#00dbec"/>
<rect x="30" y="96" width="6" height="6" fill="#00d9ec"/>
<rect x="36" y="96" width="6" height="6" fill="#46d6ec"/>
<rect x="42" y="96" width="6" height="6" fill="#70d2ea"/>
<rect x="48" y="96" width="6" height="6" fill="#9acbe5"/>
<rect x="54" y="96" width="6" height="6" fill="#b9c4df"/>
<rect x="60" y="96" width="6" height="6" fill="#d3bdd9"/>
<rect x="66" y="96" width="6" height="6" fill="#eab5d2"/>
<rect x="72" y="96" width="6" height="6" fill="#f9b0cb"/>
<rect x="78" y="96" width="6" height="6" fill="#ffacc3"/>
<rect x="84" y="96" width="6" height="6" fill="#ffa6ba"/>
<rect x="90" y="96" width="6" height="6" fill="#ffa1b3"/>
<rect x="96" y="96" width="6" height="6" fill="#ff9dae"/>
<rect x="102" y="96" width="6" height="6" fill="#ff9aa9"/>
<rect x="108" y="96" width="6" height="6" fill="#ff97a5"/>
<rect x="114" y="96" width="6" height="6" fill="#ff95a2"/>
<rect x="120" y="96" width="6" height="6" fill="#ff929f"/>
<rect x="126" y="96" width="6" height="6" fill="#ff909c"/>
<rect x="132" y="96" width="6" height="6" fill="#ff8e99"/>
<rect x="138" y="96" width="6" height="6" fill="#ff8c97"/>
<rect x="144" y="96" width="6" height="6" fill="#ff8b95"/>
<rect x="-6" y="102" width="6" height="6" fill="#00e1f7"/>
<rect x="0" y="102" width="6" height="6" fill="#00e0f8"/>
<rect x="6" y="102" width="6" height="6" fill="#00dff8"/>
<rect x="12" y="102" width="6" height="6" fill="#00ddf9"/>
<rect x="18" y="102" width="6" height="6" fill="#00dcfa"/>
<rect x="24" y="102" width="6" height="6" fill="#00d9fb"/>
<rect x="30" y="102" width="6" height="6" fill="#0bd6fd"/>
<rect x="36" y="102" width="6" height="6" fill="#62d1fc"/>
<rect x="42" y="102" width="6" height="6" fill="#8bcbf9"/>
<rect x="48" y="102" width="6" height="6" fill="#adc4f6"/>
<rect x="54" y="102" width="6" height="6" fill="#cbbcf3"/>
<rect x="60" y="102" width="6" height="6" fill="#e6b3ed"/>
<rect x="66" y="102" width="6" height="6" fill="#f8ade3"/>
<rect x="72" y="102" width="6" height="6" fill="#ffa9d7"/>
<rect x="78" y="102" width="6" height="6" fill="#ffa3cb"/>
<rect x="84" y="102" width="6" height="6" fill="#ff9ec1"/>
<rect x="90" y="102" width="6" height="6" fill="#ff9aba"/>
<rect x="96" y="102" width="6" height="6" fill="#ff97b4"/>
<rect x="102" y="102" width="6" height="6" fill="#ff94af"/>
<rect x="108" y="102" width="6" height="6" fill="#ff91ab"/>
<rect x="114" y="102" width="6" height="6" fill="#ff8fa7"/>
<rect x="120" y="102" width="6" height="6" fill="#ff8da3"/>
<rect x="126" y="102" width="6" height="6" fill="#ff8ba0"/>
<rect x="132" y="102" width="6" height="6" fill="#ff899d"/>
<rect x="138" y="102" width="6" height="6" fill="#ff879b"/>
<rect x="144" y="102" width="6" height="6" fill="#ff8698"/>
<rect x="150" y="102" width="6" height="6" fill="#ff8496"/>
<rect x="-6" y="108" width="6" height="6" fill="#00dcff"/>
<rect x="0" y="108" width="6" height="6" fill="#00dbff"/>
<rect x="6" y="108" width="6" height="6" fill="#00d8ff"/>
<rect x="12" y="108" width="6" height="6" fill="#00d5ff"/>
<rect x="18" y="108" width="6" height="6" fill="#00d1ff"/>
<rect x="24" y="108" width="6" height="6" fill="#00ceff"/>
<rect x="30" y="108" width="6" height="6" fill="#5dcaff"/>
<rect x="36" y="108" width="6" height="6" fill="#83c6ff"/>
<rect x="42" y="108" width="6" height="6" fill="#a3c2ff"/>
<rect x="48" y="108" width="6" height="6" fill="#bfbcff"/>
<rect x="54" y="108" width="6" height="6" fill="#dbb5fe"/>
<rect x="60" y="108" width="6" height="6" fill="#f4abfc"/>
<rect x="66" y="108" width="6" height="6" fill="#ffa5ee"/>
<rect x="72" y="108" width="6" height="6" fill="#ff9fdd"/>
<rect x="78" y="108" width="6" height="6" fill="#ff9ad1"/>
<rect x="84" y="108" width="6" height="6" fill="#ff96c7"/>
<rect x="90" y="108" width="6" height="6" fill="#ff93c0"/>
<rect x="96" y="108" width="6" height="6" fill="#ff90b9"/>
<rect x="102" y="108" width="6" height="6" fill="#ff8db4"/>
<rect x="108" y="108" width="6" height="6" fill="#ff8baf"/>
<rect x="114" y="108" width="6" height="6" fill="#ff89ab"/>
<rect x="120" y="108" width="6" height="6" fill="#ff87a7"/>
<rect x="126" y="108" width="6" height="6" fill="#ff85a4"/>
<rect x="132" y="108" width="6" height="6" fill="#ff83a1"/>
<rect x="138" y="108" width="6" height="6" fill="#ff829e"/>
<rect x="144" y="108" width="6" height="6" fill="#ff809b"/>
<rect x="150" y="108" width="6" height="6" fill="#ff7f99"/>
<rect x="156" y="108" width="6" height="6" fill="#ff7d97"/>
<rect x="-6" y="114" width="6" height="6" fill="#00d0ff"/>
<rect x="0" y="114" width="6" height="6" fill="#00cfff"/>
<rect x="6" y="114" width="6" height="6" fill="#00cbff"/>
<rect x="12" y="114" width="6" height="6" fill="#00c9ff"/>
<rect x="18" y="114" width="6" height="6" fill="#00c6ff"/>
<rect x="24" y="114" width="6" height="6" fill="#55c3ff"/>
<rect x="30" y="114" width="6" height="6" fill="#79bfff"/>
<rect x="36" y="114" width="6" height="6" fill="#96baff"/>
<rect x="42" y="114" width="6" height="6" fill="#afb6ff"/>
<rect x="48" y="114" width="6" height="6" fill="#c7b0ff"/>
<rect x="54" y="114" width="6" height="6" fill="#dfa9ff"/>
<rect x="60" y="114" width="6" height="6" fill="#f7a0ff"/>
<rect x="66" y="114" width="6" height="6" fill="#ff99f1"/>
<rect x="72" y="114" width="6" height="6" fill="#ff95e1"/>
<rect x="78" y="114" width="6" height="6" fill="#ff91d5"/>
<rect x="84" y="114" width="6" height="6" fill="#ff8ecc"/>
<rect x="90" y="114" width="6" height="6" fill="#ff8bc4"/>
<rect x="96" y="114" width="6" height="6" fill="#ff88bd"/>
<rect x="102" y="114" width="6" height="6" fill="#ff86b8"/>
<rect x="108" y="114" width="6" height="6" fill="#ff84b3"/>
<rect x="114" y="114" width="6" height="6" fill="#ff82ae"/>
<rect x="120" y="114" width="6" height="6" fill="#ff80aa"/>
<rect x="126" y="114" width="6" height="6" fill="#ff7fa7"/>
<rect x="132" y="114" width="6" height="6" fill="#ff7da4"/>
<rect x="138" y="114" width="6" height="6" fill="#ff7ba1"/>
<rect x="144" y="114" width="6" height="6" fill="#ff7a9e"/>
<rect x="150" y="114" width="6" height="6" fill="#ff799b"/>
<rect x="156" y="114" width="6" height="6" fill="#ff7799"/>
<rect x="-6" y="120" width="6" height="6" fill="#00c6ff"/>
<rect x="0" y="120" width="6" height="6" fill="#00c5ff"/>
<rect x="6" y="120" width="6" height="6" fill="#00c2ff"/>
<rect x="12" y="120" width="6" height="6" fill="#00bfff"/>
<rect x="18" y="120" width="6" height="6" fill="#49bcff"/>
<rect x="24" y="120" width="6" height="6" fill="#6eb8ff"/>
<rect x="30" y="120" width="6" height="6" fill="#89b4ff"/>
<rect x="36" y="120" width="6" height="6" fill="#a1afff"/>
<rect x="42" y="120" width="6" height="6" fill="#b8aaff"/>
<rect x="48" y="120" width="6" height="6" fill="#cda4ff"/>
<rect x="54" y="120" width="6" height="6" fill="#e29dff"/>
<rect x="60" y="120" width="6" height="6" fill="#f794ff"/>
<rect x="66" y="120" width="6" height="6" fill="#ff8ef3"/>
<rect x="72" y="120" width="6" height="6" fill="#ff8be4"/>
<rect x="78" y="120" width="6" height="6" fill="#ff88d9"/>
<rect x="84" y="120" width="6" height="6" fill="#ff85cf"/>
<rect x="90" y="120" width="6" height="6" fill="#ff82c7"/>
<rect x="96" y="120" width="6" height="6" fill="#ff80c1"/>
<rect x="102" y="120" width="6" height="6" fill="#ff7ebb"/>
<rect x="108" y="120" width="6" height="6" fill="#ff7cb6"/>
<rect x="114" y="120" width="6" height="6" fill="#ff7ab1"/>
<rect x="120" y="120" width="6" height="6" fill="#ff79ad"/>
<rect x="126" y="120" width="6" height="6" fill="#ff77a9"/>
<rect x="132" y="120" width="6" height="6" fill="#ff75a6"/>
<rect x="138" y="120" width="6" height="6" fill="#ff74a3"/>
<rect x="144" y="120" width="6" height="6" fill="#ff73a0"/>
<rect x="150" y="120" width="6" height="6" fill="#ff719d"/>
<rect x="156" y="120" width="6" height="6" fill="#ff709a"/>
<rect x="-6" y="126" width="6" height="6" fill="#00bcff"/>
<rect x="0" y="126" width="6" height="6" fill="#00bbff"/>
<rect x="6" y="126" width="6" height="6" fill="#00b8ff"/>
<rect x="12" y="126" width="6" height="6" fill="#37b5ff"/>
<rect x="18" y="126" width="6" height="6" fill="#60b2ff"/>
<rect x="24" y="126" width="6" height="6" fill="#7caeff"/>
<rect x="30" y="126" width="6" height="6" fill="#94a9ff"/>
<rect x="36" y="126" width="6" height="6" fill="#a9a4ff"/>
<rect x="42" y="126" width="6" height="6" fill="#bd9fff"/>
<rect x="48" y="126" width="6" height="6" fill="#d198ff"/>
<rect x="54" y="126" width="6" height="6" fill="#e491ff"/>
<rect x="60" y="126" width="6" height="6" fill="#f788ff"/>
<rect x="66" y="126" width="6" height="6" fill="#ff82f5"/>
<rect x="72" y="126" width="6" height="6" fill="#ff7fe7"/>
<rect x="78" y="126" width="6" height="6" fill="#ff7ddb"/>
<rect x="84" y="126" width="6" height="6" fill="#ff7ad2"/>
<rect x="90" y="126" width="6" height="6" fill="#ff78ca"/>
<rect x="96" y="126" width="6" height="6" fill="#ff76c3"/>
<rect x="102" y="126" width="6" height="6" fill="#ff74bd"/>
<rect x="108" y="126" width="6" height="6" fill="#ff72b8"/>
<rect x="114" y="126" width="6" height="6" fill="#ff71b3"/>
<rect x="120" y="126" width="6" height="6" fill="#ff6faf"/>
<rect x="126" y="126" width="6" height="6" fill="#ff6dab"/>
<rect x="132" y="126" width="6" height="6" fill="#ff6ca7"/>
<rect x="138" y="126" width="6" height="6" fill="#ff6ba4"/>
<rect x="144" y="126" width="6" height="6" fill="#ff69a1"/>
<rect x="150" y="126" width="6" height="6" fill="#ff689e"/>
<rect x="156" y="126" width="6" height="6" fill="#ff679b"/>
<rect x="-6" y="132" width="6" height="6" fill="#00b3ff"/>
<rect x="0" y="132" width="6" height="6" fill="#00b1ff"/>
<rect x="6" y="132" width="6" height="6" fill="#00aeff"/>
<rect x="12" y="132" width="6" height="6" fill="#4daaff"/>
<rect x="18" y="132" width="6" height="6" fill="#6da7ff"/>
<rect x="24" y="132" width="6" height="6" fill="#85a2ff"/>
<rect x="30" y="132" width="6" height="6" fill="#9b9eff"/>
<rect x="36" y="132" width="6" height="6" fill="#ae98ff"/>
<rect x="42" y="132" width="6" height="6" fill="#c192ff"/>
<rect x="48" y="132" width="6" height="6" fill="#d38bff"/>
<rect x="54" y="132" width="6" height="6" fill="#e583ff"/>
<rect x="60" y="132" width="6" height="6" fill="#f67aff"/>
<rect x="66" y="132" width="6" height="6" fill="#ff73f7"/>
<rect x="72" y="132" width="6" height="6" fill="#ff71e9"/>
<rect x="78" y="132" width="6" height="6" fill="#ff6fde"/>
<rect x="84" y="132" width="6" height="6" fill="#ff6dd4"/>
<rect x="90" y="132" width="6" height="6" fill="#ff6bcc"/>
<rect x="96" y="132" width="6" height="6" fill="#ff69c5"/>
<rect x="102" y="132" width="6" height="6" fill="#ff67bf"/>
<rect x="108" y="132" width="6" height="6" fill="#ff65b9"/>
<rect x="114" y="132" width="6" height="6" fill="#ff64b4"/>
<rect x="120" y="132" width="6" height="6" fill="#ff62b0"/>
<rect x="126" y="132" width="6" height="6" fill="#ff61ac"/>
<rect x="132" y="132" width="6" height="6" fill="#ff5fa8"/>
<rect x="138" y="132" width="6" height="6" fill="#ff5ea4"/>
<rect x="144" y="132" width="6" height="6" fill="#ff5ca1"/>
<rect x="150" y="132" width="6" height="6" fill="#ff5b9e"/>
<rect x="156" y="132" width="6" height="6" fill="#ff5a9b"/>
<rect x="-6" y="138" width="6" height="6" fill="#00a7ff"/>
<rect x="0" y="138" width="6" height="6" fill="#00a5ff"/>
<rect x="6" y="138" width="6" height="6" fill="#23a1ff"/>
<rect x="12" y="138" width="6" height="6" fill="#559dff"/>
<rect x="18" y="138" width="6" height="6" fill="#7299ff"/>
<rect x="24" y="138" width="6" height="6" fill="#8994ff"/>
<rect x="30" y="138" width="6" height="6" fill="#9e8fff"/>
<rect x="36" y="138" width="6" height="6" fill="#b189ff"/>
<rect x="42" y="138" width="6" height="6" fill="#c382ff"/>
<rect x="48" y="138" width="6" height="6" fill="#d47aff"/>
<rect x="54" y="138" width="6" height="6" fill="#e570ff"/>
<rect x="60" y="138" width="6" height="6" fill="#f665ff"/>
<rect x="66" y="138" width="6" height="6" fill="#ff5df8"/>
<rect x="72" y="138" width="6" height="6" fill="#ff5bea"/>
<rect x="78" y="138" width="6" height="6" fill="#ff59df"/>
<rect x="84" y="138" width="6" height="6" fill="#ff57d5"/>
<rect x="90" y="138" width="6" height="6" fill="#ff56cd"/>
<rect x="96" y="138" width="6" height="6" fill="#ff54c6"/>
<rect x="102" y="138" width="6" height="6" fill="#ff52bf"/>
<rect x="108" y="138" width="6" height="6" fill="#ff50b9"/>
<rect x="114" y="138" width="6" height="6" fill="#ff4fb4"/>
<rect x="120" y="138" width="6" height="6" fill="#ff4daf"/>
<rect x="126" y="138" width="6" height="6" fill="#ff4bab"/>
<rect x="132" y="138" width="6" height="6" fill="#ff4aa7"/>
<rect x="138" y="138" width="6" height="6" fill="#ff48a3"/>
<rect x="144" y="138" width="6" height="6" fill="#ff479f"/>
<rect x="150" y="138" width="6" height="6" fill="#ff459c"/>
<rect x="156" y="138" width="6" height="6" fill="#ff4499"/>
<rect x="-6" y="144" width="6" height="6" fill="#0093ff"/>
<rect x="0" y="144" width="6" height="6" fill="#0091ff"/>
<rect x="6" y="144" width="6" height="6" fill="#008cff"/>
<rect x="12" y="144" width="6" height="6" fill="#4887ff"/>
<rect x="18" y="144" width="6" height="6" fill="#6a82ff"/>
<rect x="24" y="144" width="6" height="6" fill="#847bff"/>
<rect x="30" y="144" width="6" height="6" fill="#9a74ff"/>
<rect x="36" y="144" width="6" height="6" fill="#ae6bff"/>
<rect x="42" y="144" width="6" height="6" fill="#c161ff"/>
<rect x="48" y="144" width="6" height="6" fill="#d355ff"/>
<rect x="54" y="144" width="6" height="6" fill="#e444ff"/>
<rect x="60" y="144" width="6" height="6" fill="#f52aff"/>
<rect x="66" y="144" width="6" height="6" fill="#ff00f9"/>
<rect x="72" y="144" width="6" height="6" fill="#ff00ea"/>
<rect x="78" y="144" width="6" height="6" fill="#ff00df"/>
<rect x="84" y="144" width="6" height="6" fill="#ff00d4"/>
<rect x="90" y="144" width="6" height="6" fill="#ff00cb"/>
<rect x="96" y="144" width="6" height="6" fill="#ff00c3"/>
<rect x="102" y="144" width="6" height="6" fill="#ff00bc"/>
<rect x="108" y="144" width="6" height="6" fill="#ff00b6"/>
<rect x="114" y="144" width="6" height="6" fill="#ff00b0"/>
<rect x="120" y="144" width="6" height="6" fill="#ff00ab"/>
<rect x="126" y="144" width="6" height="6" fill="#ff00a6"/>
<rect x="132" y="144" width="6" height="6" fill="#ff00a1"/>
<rect x="138" y="144" width="6" height="6" fill="#ff009d"/>
<rect x="144" y="144" width="6" height="6" fill="#ff0099"/>
<rect x="150" y="144" width="6" height="6" fill="#ff0095"/>
<rect x="156" y="144" width="6" height="6" fill="#ff0091"/>
<rect x="-6" y="150" width="6" height="6" fill="#0070ff"/>
<rect x="0" y="150" width="6" height="6" fill="#006cff"/>
<rect x="6" y="150" width="6" height="6" fill="#0064ff"/>
<rect x="12" y="150" width="6" height="6" fill="#005aff"/>
<rect x="18" y="150" width="6" height="6" fill="#314fff"/>
<rect x="24" y="150" width="6" height="6" fill="#643fff"/>
<rect x="30" y="150" width="6" height="6" fill="#8427ff"/>
<rect x="36" y="150" width="6" height="6" fill="#9e00ff"/>
<rect x="42" y="150" width="6" height="6" fill="#b600ff"/>
<rect x="48" y="150" width="6" height="6" fill="#cb00ff"/>
<rect x="54" y="150" width="6" height="6" fill="#df00ff"/>
<rect x="60" y="150" width="6" height="6" fill="#f300ff"/>
<rect x="66" y="150" width="6" height="6" fill="#ff00f8"/>
<rect x="72" y="150" width="6" height="6" fill="#ff00e8"/>
<rect x="78" y="150" width="6" height="6" fill="#ff00da"/>
<rect x="84" y="150" width="6" height="6" fill="#ff00ce"/>
<rect x="90" y="150" width="6" height="6" fill="#ff00c3"/>
<rect x="96" y="150" width="6" height="6" fill="#ff00ba"/>
<rect x="102" y="150" width="6" height="6" fill="#ff00b1"/>
<rect x="108" y="150" width="6" height="6" fill="#ff00aa"/>
<rect x="114" y="150" width="6" height="6" fill="#ff00a3"/>
<rect x="120" y="150" width="6" height="6" fill="#ff009c"/>
<rect x="126" y="150" width="6" height="6" fill="#ff0096"/>
<rect x="132" y="150" width="6" height="6" fill="#ff0090"/>
<rect x="138" y="150" width="6" height="6" fill="#ff008b"/>
<rect x="144" y="150" width="6" height="6" fill="#ff0085"/>
<rect x="150" y="150" width="6" height="6" fill="#ff0080"/>
<rect x="156" y="150" width="6" height="6" fill="#ff007c"/>
</g></g>
<path d="M20.5 0V150M41.5 0V150M61.5 0V150M81.5 0V150M102.5 0V150M122.5 0V150M142.5 0V150M0 132.5H153M0 115.5H153M0 97.5H153M0 80.5H153M0 62.5H153M0 44.5H153M0 27.5H153M0 9.5H153" stroke="#fff" stroke-opacity=".55" stroke-width="1" fill="none"/>
<path d="M133.3 92.0 L40.7 34.8 L30.5 140.3 Z" stroke="#5a5a5a" stroke-width=".7" fill="none"/>
<circle cx="83.5" cy="61.2" r="2.5" stroke="#1a1a1a" stroke-width="1" fill="none"/>
<circle cx="62.5" cy="91.1" r=".8" fill="#fff"/>
</svg>
<div class="abs tk" style="left:133px;top:224px;width:24px;text-align:center">0.0</div>
<div class="abs tk" style="left:151px;top:224px;width:24px;text-align:center">0.1</div>
<div class="abs tk" style="left:172px;top:224px;width:24px;text-align:center">0.2</div>
<div class="abs tk" style="left:192px;top:224px;width:24px;text-align:center">0.3</div>
<div class="abs tk" style="left:212px;top:224px;width:24px;text-align:center">0.4</div>
<div class="abs tk" style="left:233px;top:224px;width:24px;text-align:center">0.5</div>
<div class="abs tk" style="left:253px;top:224px;width:24px;text-align:center">0.6</div>
<div class="abs tk" style="left:273px;top:224px;width:24px;text-align:center">0.7</div>
<div class="abs tk" style="left:118px;top:215px;width:22px;text-align:right">0.0</div>
<div class="abs tk" style="left:118px;top:197px;width:22px;text-align:right">0.1</div>
<div class="abs tk" style="left:118px;top:180px;width:22px;text-align:right">0.2</div>
<div class="abs tk" style="left:118px;top:162px;width:22px;text-align:right">0.3</div>
<div class="abs tk" style="left:118px;top:145px;width:22px;text-align:right">0.4</div>
<div class="abs tk" style="left:118px;top:127px;width:22px;text-align:right">0.5</div>
<div class="abs tk" style="left:118px;top:109px;width:22px;text-align:right">0.6</div>
<div class="abs tk" style="left:118px;top:92px;width:22px;text-align:right">0.7</div>
<div class="abs tk" style="left:118px;top:74px;width:22px;text-align:right">0.8</div>
<svg class="abs" style="left:137px;top:68px" width="170" height="160" viewBox="0 0 170 160">
<path d="M3 154.5H6M3 136.5H6M3 119.5H6M3 101.5H6M3 84.5H6M3 66.5H6M3 48.5H6M3 31.5H6M3 13.5H6M6.5 154V157M26.5 154V157M47.5 154V157M67.5 154V157M87.5 154V157M108.5 154V157M128.5 154V157M148.5 154V157" stroke="#000" stroke-width="1"/></svg>
 <div class="btn def" style="left:331px;top:258px;letter-spacing:-.45px">Schließen</div>
</div>

<!-- ===== Validierungsergebnis (active) ===== -->
<div class="win act" id="w1" style="left:16px;top:18px;width:805px;height:671px">
 <div class="tb"></div>
 <svg class="abs" style="left:6px;top:8px" width="16" height="16" viewBox="0 0 16 16"><path d="M1 5l6-4h3l5 3v9l-2 2H3l-2-2z" fill="#6a8c14"/><path d="M2 4.5l5-3h3l4 3-2 3H4z" fill="#a6bc22"/><path d="M10 6l5-1v8l-2 2h-3z" fill="#4a7410"/><path d="M3 8l4-3 3 2v8H4z" fill="#d29a1e"/><circle cx="6.5" cy="8.5" r="1.7" fill="#7c1608"/><path d="M4.5 15l1-3.5h2.5l1 3.5z" fill="#5e2406"/><circle cx="11.5" cy="9" r="1.2" fill="#5a5a10"/></svg>
 <div class="ttl" style="left:26px">Validierungsergebnis</div>
 <div class="wb" style="left:732px;top:6px"><svg width="19" height="19"><rect x="4" y="12" width="7" height="3" fill="#fff"/></svg></div>
 <div class="wb" style="left:755px;top:6px"><svg width="19" height="19"><path d="M4.5 5.5h10v9h-10z" stroke="#fff" stroke-width="1" fill="none"/><rect x="4" y="4" width="11" height="3" fill="#fff"/></svg></div>
 <div class="wb x" style="left:778px;top:6px"><svg width="19" height="19"><path d="M5 5l9 9M14 5l-9 9" stroke="#fff" stroke-width="2.2"/></svg></div>

 <!-- checkbox -->
 <div class="abs" style="left:16px;top:44px;width:13px;height:13px;background:#fff;border:1px solid #716f64;border-right-color:#d4d0c8;border-bottom-color:#d4d0c8;box-shadow:inset 1px 1px 0 #404040"></div>
 <svg class="abs" style="left:16px;top:44px" width="13" height="13"><path d="M3 5.5l2.5 2.5L10 3.5" stroke="#000" stroke-width="2" fill="none"/></svg>
 <div class="abs" style="left:30px;top:42px;width:88px;height:18px;border:1px dotted #000"></div>
 <div class="t" style="left:33px;top:44px;letter-spacing:-.32px">CIELAB anzeigen</div>
 <!-- radios -->
 <div class="abs" style="left:706px;top:44px;width:12px;height:12px;border-radius:6px;background:#fff;border:1px solid #808080;border-right-color:#e8e6dc;border-bottom-color:#e8e6dc"></div>
 <div class="t" style="left:723px;top:44px">ΔE</div>
 <div class="abs" style="left:742px;top:44px;width:12px;height:12px;border-radius:6px;background:#fff;border:1px solid #808080;border-right-color:#e8e6dc;border-bottom-color:#e8e6dc"></div>
 <div class="abs" style="left:746px;top:48px;width:4px;height:4px;border-radius:2px;background:#000"></div>
 <div class="t" style="left:759px;top:44px">ΔE94</div>

 <!-- table frame -->
 <div class="abs" style="left:16px;top:69px;width:774px;height:370px;border:1px solid #a19e90;border-right-color:#fff;border-bottom-color:#fff;background:#fff"></div>
 <div class="abs" style="left:17px;top:70px;width:772px;height:368px;border:1px solid #777468;border-right-color:#e4e1d2;border-bottom-color:#e4e1d2"></div>
 <div class="abs" style="left:579px;top:71px;width:209px;height:366px;background:linear-gradient(90deg,#00ff00 0%,#00ff00 20%,#ffff00 32.5%,#ffff00 41%,#ff0000 79%,#ff0000 100%)"></div>
<div class="abs" style="left:18px;top:71px;width:561px;height:16px;background:#ece9d8"></div>
<div class="c" style="left:-14px;top:70px">Nr.</div>
<div class="c" style="left:28px;top:70px">R</div>
<div class="c" style="left:70px;top:70px">G</div>
<div class="c" style="left:112px;top:70px">B</div>
<div class="c" style="left:174px;top:70px">ref L</div>
<div class="c" style="left:226px;top:70px">ref a</div>
<div class="c" style="left:278px;top:70px">ref b</div>
<div class="c" style="left:340px;top:70px">L</div>
<div class="c" style="left:392px;top:70px">a</div>
<div class="c" style="left:444px;top:70px">b</div>
<div class="c" style="left:506px;top:70px">ΔE<span class="sub">94</span></div>
<div class="abs" style="left:18px;top:87px;width:561px;height:15px;background:#fff"></div>
<div class="c" style="left:-14px;top:87px;height:15px;line-height:15px">0</div>
<div class="c" style="left:28px;top:87px;height:15px;line-height:15px">255</div>
<div class="c" style="left:70px;top:87px;height:15px;line-height:15px">255</div>
<div class="c" style="left:112px;top:87px;height:15px;line-height:15px">255</div>
<div class="c" style="left:174px;top:87px;height:15px;line-height:15px">100.0</div>
<div class="c" style="left:226px;top:87px;height:15px;line-height:15px">0.0</div>
<div class="c" style="left:278px;top:87px;height:15px;line-height:15px">0.0</div>
<div class="c" style="left:340px;top:87px;height:15px;line-height:15px">100.0</div>
<div class="c" style="left:392px;top:87px;height:15px;line-height:15px">0.0</div>
<div class="c" style="left:444px;top:87px;height:15px;line-height:15px">0.0</div>
<div class="c" style="left:506px;top:87px;height:15px;line-height:15px">0.00</div>
<div class="abs" style="left:18px;top:102px;width:561px;height:14px;background:#ece9d8"></div>
<div class="c" style="left:-14px;top:102px;height:14px;line-height:14px">1</div>
<div class="c" style="left:28px;top:102px;height:14px;line-height:14px">224</div>
<div class="c" style="left:70px;top:102px;height:14px;line-height:14px">224</div>
<div class="c" style="left:112px;top:102px;height:14px;line-height:14px">224</div>
<div class="c" style="left:174px;top:102px;height:14px;line-height:14px">87.9</div>
<div class="c" style="left:226px;top:102px;height:14px;line-height:14px">0.0</div>
<div class="c" style="left:278px;top:102px;height:14px;line-height:14px">-0.0</div>
<div class="c" style="left:340px;top:102px;height:14px;line-height:14px">87.7</div>
<div class="c" style="left:392px;top:102px;height:14px;line-height:14px">0.5</div>
<div class="c" style="left:444px;top:102px;height:14px;line-height:14px">-0.5</div>
<div class="c" style="left:506px;top:102px;height:14px;line-height:14px">0.73</div>
<div class="abs bar" style="left:579px;top:105px;width:31px;height:9px;background:rgb(224,224,224)"></div>
<div class="abs" style="left:18px;top:116px;width:561px;height:15px;background:#fff"></div>
<div class="c" style="left:-14px;top:116px;height:15px;line-height:15px">2</div>
<div class="c" style="left:28px;top:116px;height:15px;line-height:15px">192</div>
<div class="c" style="left:70px;top:116px;height:15px;line-height:15px">192</div>
<div class="c" style="left:112px;top:116px;height:15px;line-height:15px">192</div>
<div class="c" style="left:174px;top:116px;height:15px;line-height:15px">75.4</div>
<div class="c" style="left:226px;top:116px;height:15px;line-height:15px">0.0</div>
<div class="c" style="left:278px;top:116px;height:15px;line-height:15px">0.0</div>
<div class="c" style="left:340px;top:116px;height:15px;line-height:15px">75.3</div>
<div class="c" style="left:392px;top:116px;height:15px;line-height:15px">0.1</div>
<div class="c" style="left:444px;top:116px;height:15px;line-height:15px">0.1</div>
<div class="c" style="left:506px;top:116px;height:15px;line-height:15px">0.14</div>
<div class="abs bar" style="left:579px;top:119px;width:6px;height:10px;background:rgb(192,192,192)"></div>
<div class="abs" style="left:18px;top:131px;width:561px;height:14px;background:#ece9d8"></div>
<div class="c" style="left:-14px;top:131px;height:14px;line-height:14px">3</div>
<div class="c" style="left:28px;top:131px;height:14px;line-height:14px">160</div>
<div class="c" style="left:70px;top:131px;height:14px;line-height:14px">160</div>
<div class="c" style="left:112px;top:131px;height:14px;line-height:14px">160</div>
<div class="c" style="left:174px;top:131px;height:14px;line-height:14px">63.0</div>
<div class="c" style="left:226px;top:131px;height:14px;line-height:14px">0.0</div>
<div class="c" style="left:278px;top:131px;height:14px;line-height:14px">-0.0</div>
<div class="c" style="left:340px;top:131px;height:14px;line-height:14px">63.2</div>
<div class="c" style="left:392px;top:131px;height:14px;line-height:14px">0.5</div>
<div class="c" style="left:444px;top:131px;height:14px;line-height:14px">-0.1</div>
<div class="c" style="left:506px;top:131px;height:14px;line-height:14px">0.50</div>
<div class="abs bar" style="left:579px;top:134px;width:21px;height:9px;background:rgb(160,160,160)"></div>
<div class="abs" style="left:18px;top:145px;width:561px;height:15px;background:#fff"></div>
<div class="c" style="left:-14px;top:145px;height:15px;line-height:15px">4</div>
<div class="c" style="left:28px;top:145px;height:15px;line-height:15px">128</div>
<div class="c" style="left:70px;top:145px;height:15px;line-height:15px">128</div>
<div class="c" style="left:112px;top:145px;height:15px;line-height:15px">128</div>
<div class="c" style="left:174px;top:145px;height:15px;line-height:15px">50.6</div>
<div class="c" style="left:226px;top:145px;height:15px;line-height:15px">-0.0</div>
<div class="c" style="left:278px;top:145px;height:15px;line-height:15px">-0.0</div>
<div class="c" style="left:340px;top:145px;height:15px;line-height:15px">50.5</div>
<div class="c" style="left:392px;top:145px;height:15px;line-height:15px">0.6</div>
<div class="c" style="left:444px;top:145px;height:15px;line-height:15px">-0.3</div>
<div class="c" style="left:506px;top:145px;height:15px;line-height:15px">0.71</div>
<div class="abs bar" style="left:579px;top:148px;width:30px;height:10px;background:rgb(128,128,128)"></div>
<div class="abs" style="left:18px;top:160px;width:561px;height:14px;background:#ece9d8"></div>
<div class="c" style="left:-14px;top:160px;height:14px;line-height:14px">5</div>
<div class="c" style="left:28px;top:160px;height:14px;line-height:14px">96</div>
<div class="c" style="left:70px;top:160px;height:14px;line-height:14px">96</div>
<div class="c" style="left:112px;top:160px;height:14px;line-height:14px">96</div>
<div class="c" style="left:174px;top:160px;height:14px;line-height:14px">38.3</div>
<div class="c" style="left:226px;top:160px;height:14px;line-height:14px">0.0</div>
<div class="c" style="left:278px;top:160px;height:14px;line-height:14px">-0.0</div>
<div class="c" style="left:340px;top:160px;height:14px;line-height:14px">38.5</div>
<div class="c" style="left:392px;top:160px;height:14px;line-height:14px">0.9</div>
<div class="c" style="left:444px;top:160px;height:14px;line-height:14px">-0.4</div>
<div class="c" style="left:506px;top:160px;height:14px;line-height:14px">1.03</div>
<div class="abs bar" style="left:579px;top:163px;width:43px;height:9px;background:rgb(96,96,96)"></div>
<div class="abs" style="left:18px;top:174px;width:561px;height:15px;background:#fff"></div>
<div class="c" style="left:-14px;top:174px;height:15px;line-height:15px">6</div>
<div class="c" style="left:28px;top:174px;height:15px;line-height:15px">64</div>
<div class="c" style="left:70px;top:174px;height:15px;line-height:15px">64</div>
<div class="c" style="left:112px;top:174px;height:15px;line-height:15px">64</div>
<div class="c" style="left:174px;top:174px;height:15px;line-height:15px">26.2</div>
<div class="c" style="left:226px;top:174px;height:15px;line-height:15px">0.0</div>
<div class="c" style="left:278px;top:174px;height:15px;line-height:15px">0.0</div>
<div class="c" style="left:340px;top:174px;height:15px;line-height:15px">26.5</div>
<div class="c" style="left:392px;top:174px;height:15px;line-height:15px">-0.3</div>
<div class="c" style="left:444px;top:174px;height:15px;line-height:15px">-0.6</div>
<div class="c" style="left:506px;top:174px;height:15px;line-height:15px">0.72</div>
<div class="abs bar" style="left:579px;top:177px;width:30px;height:10px;background:rgb(64,64,64)"></div>
<div class="abs" style="left:18px;top:189px;width:561px;height:14px;background:#ece9d8"></div>
<div class="c" style="left:-14px;top:189px;height:14px;line-height:14px">7</div>
<div class="c" style="left:28px;top:189px;height:14px;line-height:14px">32</div>
<div class="c" style="left:70px;top:189px;height:14px;line-height:14px">32</div>
<div class="c" style="left:112px;top:189px;height:14px;line-height:14px">32</div>
<div class="c" style="left:174px;top:189px;height:14px;line-height:14px">14.6</div>
<div class="c" style="left:226px;top:189px;height:14px;line-height:14px">0.0</div>
<div class="c" style="left:278px;top:189px;height:14px;line-height:14px">-0.1</div>
<div class="c" style="left:340px;top:189px;height:14px;line-height:14px">14.3</div>
<div class="c" style="left:392px;top:189px;height:14px;line-height:14px">0.9</div>
<div class="c" style="left:444px;top:189px;height:14px;line-height:14px">-0.5</div>
<div class="c" style="left:506px;top:189px;height:14px;line-height:14px">0.90</div>
<div class="abs bar" style="left:579px;top:192px;width:38px;height:9px;background:rgb(32,32,32)"></div>
<div class="abs" style="left:18px;top:203px;width:561px;height:15px;background:#fff"></div>
<div class="c" style="left:-14px;top:203px;height:15px;line-height:15px">8</div>
<div class="c" style="left:28px;top:203px;height:15px;line-height:15px">0</div>
<div class="c" style="left:70px;top:203px;height:15px;line-height:15px">0</div>
<div class="c" style="left:112px;top:203px;height:15px;line-height:15px">0</div>
<div class="c" style="left:174px;top:203px;height:15px;line-height:15px">2.5</div>
<div class="c" style="left:226px;top:203px;height:15px;line-height:15px">0.9</div>
<div class="c" style="left:278px;top:203px;height:15px;line-height:15px">-2.6</div>
<div class="c" style="left:340px;top:203px;height:15px;line-height:15px">2.7</div>
<div class="c" style="left:392px;top:203px;height:15px;line-height:15px">2.6</div>
<div class="c" style="left:444px;top:203px;height:15px;line-height:15px">-2.5</div>
<div class="c" style="left:506px;top:203px;height:15px;line-height:15px">1.55</div>
<div class="abs bar" style="left:579px;top:206px;width:65px;height:10px;background:rgb(0,0,0)"></div>
<div class="abs" style="left:18px;top:218px;width:561px;height:15px;background:#ece9d8"></div>
<div class="c" style="left:-14px;top:218px;height:15px;line-height:15px">9</div>
<div class="c" style="left:28px;top:218px;height:15px;line-height:15px">128</div>
<div class="c" style="left:70px;top:218px;height:15px;line-height:15px">0</div>
<div class="c" style="left:112px;top:218px;height:15px;line-height:15px">0</div>
<div class="c" style="left:174px;top:218px;height:15px;line-height:15px">28.5</div>
<div class="c" style="left:226px;top:218px;height:15px;line-height:15px">51.2</div>
<div class="c" style="left:278px;top:218px;height:15px;line-height:15px">42.5</div>
<div class="c" style="left:340px;top:218px;height:15px;line-height:15px">28.7</div>
<div class="c" style="left:392px;top:218px;height:15px;line-height:15px">51.4</div>
<div class="c" style="left:444px;top:218px;height:15px;line-height:15px">42.6</div>
<div class="c" style="left:506px;top:218px;height:15px;line-height:15px">0.11</div>
<div class="abs bar" style="left:579px;top:221px;width:5px;height:10px;background:rgb(128,0,0)"></div>
<div class="abs" style="left:18px;top:233px;width:561px;height:14px;background:#fff"></div>
<div class="c" style="left:-14px;top:233px;height:14px;line-height:14px">10</div>
<div class="c" style="left:28px;top:233px;height:14px;line-height:14px">255</div>
<div class="c" style="left:70px;top:233px;height:14px;line-height:14px">0</div>
<div class="c" style="left:112px;top:233px;height:14px;line-height:14px">0</div>
<div class="c" style="left:174px;top:233px;height:14px;line-height:14px">61.8</div>
<div class="c" style="left:226px;top:233px;height:14px;line-height:14px">93.3</div>
<div class="c" style="left:278px;top:233px;height:14px;line-height:14px">95.1</div>
<div class="c" style="left:340px;top:233px;height:14px;line-height:14px">61.8</div>
<div class="c" style="left:392px;top:233px;height:14px;line-height:14px">93.2</div>
<div class="c" style="left:444px;top:233px;height:14px;line-height:14px">94.3</div>
<div class="c" style="left:506px;top:233px;height:14px;line-height:14px">0.12</div>
<div class="abs bar" style="left:579px;top:236px;width:5px;height:9px;background:rgb(255,0,0)"></div>
<div class="abs" style="left:18px;top:247px;width:561px;height:15px;background:#ece9d8"></div>
<div class="c" style="left:-14px;top:247px;height:15px;line-height:15px">11</div>
<div class="c" style="left:28px;top:247px;height:15px;line-height:15px">255</div>
<div class="c" style="left:70px;top:247px;height:15px;line-height:15px">128</div>
<div class="c" style="left:112px;top:247px;height:15px;line-height:15px">128</div>
<div class="c" style="left:174px;top:247px;height:15px;line-height:15px">71.6</div>
<div class="c" style="left:226px;top:247px;height:15px;line-height:15px">66.8</div>
<div class="c" style="left:278px;top:247px;height:15px;line-height:15px">35.7</div>
<div class="c" style="left:340px;top:247px;height:15px;line-height:15px">71.7</div>
<div class="c" style="left:392px;top:247px;height:15px;line-height:15px">66.3</div>
<div class="c" style="left:444px;top:247px;height:15px;line-height:15px">35.4</div>
<div class="c" style="left:506px;top:247px;height:15px;line-height:15px">0.13</div>
<div class="abs bar" style="left:579px;top:250px;width:5px;height:10px;background:rgb(255,128,128)"></div>
<div class="abs" style="left:18px;top:262px;width:561px;height:14px;background:#fff"></div>
<div class="c" style="left:-14px;top:262px;height:14px;line-height:14px">12</div>
<div class="c" style="left:28px;top:262px;height:14px;line-height:14px">0</div>
<div class="c" style="left:70px;top:262px;height:14px;line-height:14px">128</div>
<div class="c" style="left:112px;top:262px;height:14px;line-height:14px">0</div>
<div class="c" style="left:174px;top:262px;height:14px;line-height:14px">41.4</div>
<div class="c" style="left:226px;top:262px;height:14px;line-height:14px">-73.7</div>
<div class="c" style="left:278px;top:262px;height:14px;line-height:14px">38.5</div>
<div class="c" style="left:340px;top:262px;height:14px;line-height:14px">41.1</div>
<div class="c" style="left:392px;top:262px;height:14px;line-height:14px">-74.1</div>
<div class="c" style="left:444px;top:262px;height:14px;line-height:14px">38.0</div>
<div class="c" style="left:506px;top:262px;height:14px;line-height:14px">0.21</div>
<div class="abs bar" style="left:579px;top:265px;width:9px;height:9px;background:rgb(0,128,0)"></div>
<div class="abs" style="left:18px;top:276px;width:561px;height:15px;background:#ece9d8"></div>
<div class="c" style="left:-14px;top:276px;height:15px;line-height:15px">13</div>
<div class="c" style="left:28px;top:276px;height:15px;line-height:15px">0</div>
<div class="c" style="left:70px;top:276px;height:15px;line-height:15px">255</div>
<div class="c" style="left:112px;top:276px;height:15px;line-height:15px">0</div>
<div class="c" style="left:174px;top:276px;height:15px;line-height:15px">83.7</div>
<div class="c" style="left:226px;top:276px;height:15px;line-height:15px">-128.5</div>
<div class="c" style="left:278px;top:276px;height:15px;line-height:15px">70.2</div>
<div class="c" style="left:340px;top:276px;height:15px;line-height:15px">83.9</div>
<div class="c" style="left:392px;top:276px;height:15px;line-height:15px">-128.1</div>
<div class="c" style="left:444px;top:276px;height:15px;line-height:15px">70.2</div>
<div class="c" style="left:506px;top:276px;height:15px;line-height:15px">0.08</div>
<div class="abs bar" style="left:579px;top:279px;width:3px;height:10px;background:rgb(0,255,0)"></div>
<div class="abs" style="left:18px;top:291px;width:561px;height:14px;background:#fff"></div>
<div class="c" style="left:-14px;top:291px;height:14px;line-height:14px">14</div>
<div class="c" style="left:28px;top:291px;height:14px;line-height:14px">128</div>
<div class="c" style="left:70px;top:291px;height:14px;line-height:14px">255</div>
<div class="c" style="left:112px;top:291px;height:14px;line-height:14px">128</div>
<div class="c" style="left:174px;top:291px;height:14px;line-height:14px">88.2</div>
<div class="c" style="left:226px;top:291px;height:14px;line-height:14px">-87.2</div>
<div class="c" style="left:278px;top:291px;height:14px;line-height:14px">46.4</div>
<div class="c" style="left:340px;top:291px;height:14px;line-height:14px">87.7</div>
<div class="c" style="left:392px;top:291px;height:14px;line-height:14px">-86.8</div>
<div class="c" style="left:444px;top:291px;height:14px;line-height:14px">45.4</div>
<div class="c" style="left:506px;top:291px;height:14px;line-height:14px">0.34</div>
<div class="abs bar" style="left:579px;top:294px;width:14px;height:9px;background:rgb(128,255,128)"></div>
<div class="abs" style="left:18px;top:305px;width:561px;height:15px;background:#ece9d8"></div>
<div class="c" style="left:-14px;top:305px;height:15px;line-height:15px">15</div>
<div class="c" style="left:28px;top:305px;height:15px;line-height:15px">0</div>
<div class="c" style="left:70px;top:305px;height:15px;line-height:15px">0</div>
<div class="c" style="left:112px;top:305px;height:15px;line-height:15px">128</div>
<div class="c" style="left:174px;top:305px;height:15px;line-height:15px">8.7</div>
<div class="c" style="left:226px;top:305px;height:15px;line-height:15px">46.1</div>
<div class="c" style="left:278px;top:305px;height:15px;line-height:15px">-65.6</div>
<div class="c" style="left:340px;top:305px;height:15px;line-height:15px">8.5</div>
<div class="c" style="left:392px;top:305px;height:15px;line-height:15px">47.5</div>
<div class="c" style="left:444px;top:305px;height:15px;line-height:15px">-66.4</div>
<div class="c" style="left:506px;top:305px;height:15px;line-height:15px">0.35</div>
<div class="abs bar" style="left:579px;top:308px;width:15px;height:10px;background:rgb(0,0,128)"></div>
<div class="abs" style="left:18px;top:320px;width:561px;height:15px;background:#fff"></div>
<div class="c" style="left:-14px;top:320px;height:15px;line-height:15px">16</div>
<div class="c" style="left:28px;top:320px;height:15px;line-height:15px">0</div>
<div class="c" style="left:70px;top:320px;height:15px;line-height:15px">0</div>
<div class="c" style="left:112px;top:320px;height:15px;line-height:15px">255</div>
<div class="c" style="left:174px;top:320px;height:15px;line-height:15px">24.7</div>
<div class="c" style="left:226px;top:320px;height:15px;line-height:15px">83.0</div>
<div class="c" style="left:278px;top:320px;height:15px;line-height:15px">-118.7</div>
<div class="c" style="left:340px;top:320px;height:15px;line-height:15px">24.8</div>
<div class="c" style="left:392px;top:320px;height:15px;line-height:15px">83.3</div>
<div class="c" style="left:444px;top:320px;height:15px;line-height:15px">-118.6</div>
<div class="c" style="left:506px;top:320px;height:15px;line-height:15px">0.04</div>
<div class="abs bar" style="left:579px;top:323px;width:2px;height:10px;background:rgb(0,0,255)"></div>
<div class="abs" style="left:18px;top:335px;width:561px;height:14px;background:#ece9d8"></div>
<div class="c" style="left:-14px;top:335px;height:14px;line-height:14px">17</div>
<div class="c" style="left:28px;top:335px;height:14px;line-height:14px">128</div>
<div class="c" style="left:70px;top:335px;height:14px;line-height:14px">128</div>
<div class="c" style="left:112px;top:335px;height:14px;line-height:14px">255</div>
<div class="c" style="left:174px;top:335px;height:14px;line-height:14px">54.3</div>
<div class="c" style="left:226px;top:335px;height:14px;line-height:14px">30.1</div>
<div class="c" style="left:278px;top:335px;height:14px;line-height:14px">-70.7</div>
<div class="c" style="left:340px;top:335px;height:14px;line-height:14px">54.3</div>
<div class="c" style="left:392px;top:335px;height:14px;line-height:14px">31.3</div>
<div class="c" style="left:444px;top:335px;height:14px;line-height:14px">-70.4</div>
<div class="c" style="left:506px;top:335px;height:14px;line-height:14px">0.28</div>
<div class="abs bar" style="left:579px;top:338px;width:12px;height:9px;background:rgb(128,128,255)"></div>
<div class="abs" style="left:18px;top:349px;width:561px;height:15px;background:#fff"></div>
<div class="c" style="left:-14px;top:349px;height:15px;line-height:15px">18</div>
<div class="c" style="left:28px;top:349px;height:15px;line-height:15px">0</div>
<div class="c" style="left:70px;top:349px;height:15px;line-height:15px">128</div>
<div class="c" style="left:112px;top:349px;height:15px;line-height:15px">128</div>
<div class="c" style="left:174px;top:349px;height:15px;line-height:15px">42.4</div>
<div class="c" style="left:226px;top:349px;height:15px;line-height:15px">-48.1</div>
<div class="c" style="left:278px;top:349px;height:15px;line-height:15px">-13.0</div>
<div class="c" style="left:340px;top:349px;height:15px;line-height:15px">42.8</div>
<div class="c" style="left:392px;top:349px;height:15px;line-height:15px">-47.5</div>
<div class="c" style="left:444px;top:349px;height:15px;line-height:15px">-12.4</div>
<div class="c" style="left:506px;top:349px;height:15px;line-height:15px">0.35</div>
<div class="abs bar" style="left:579px;top:352px;width:15px;height:10px;background:rgb(0,128,128)"></div>
<div class="abs" style="left:18px;top:364px;width:561px;height:14px;background:#ece9d8"></div>
<div class="c" style="left:-14px;top:364px;height:14px;line-height:14px">19</div>
<div class="c" style="left:28px;top:364px;height:14px;line-height:14px">0</div>
<div class="c" style="left:70px;top:364px;height:14px;line-height:14px">255</div>
<div class="c" style="left:112px;top:364px;height:14px;line-height:14px">255</div>
<div class="c" style="left:174px;top:364px;height:14px;line-height:14px">86.6</div>
<div class="c" style="left:226px;top:364px;height:14px;line-height:14px">-86.9</div>
<div class="c" style="left:278px;top:364px;height:14px;line-height:14px">-21.3</div>
<div class="c" style="left:340px;top:364px;height:14px;line-height:14px">86.6</div>
<div class="c" style="left:392px;top:364px;height:14px;line-height:14px">-86.5</div>
<div class="c" style="left:444px;top:364px;height:14px;line-height:14px">-21.2</div>
<div class="c" style="left:506px;top:364px;height:14px;line-height:14px">0.09</div>
<div class="abs bar" style="left:579px;top:367px;width:4px;height:9px;background:rgb(0,255,255)"></div>
<div class="abs" style="left:18px;top:378px;width:561px;height:15px;background:#fff"></div>
<div class="c" style="left:-14px;top:378px;height:15px;line-height:15px">20</div>
<div class="c" style="left:28px;top:378px;height:15px;line-height:15px">128</div>
<div class="c" style="left:70px;top:378px;height:15px;line-height:15px">0</div>
<div class="c" style="left:112px;top:378px;height:15px;line-height:15px">128</div>
<div class="c" style="left:174px;top:378px;height:15px;line-height:15px">31.1</div>
<div class="c" style="left:226px;top:378px;height:15px;line-height:15px">61.7</div>
<div class="c" style="left:278px;top:378px;height:15px;line-height:15px">-28.7</div>
<div class="c" style="left:340px;top:378px;height:15px;line-height:15px">30.7</div>
<div class="c" style="left:392px;top:378px;height:15px;line-height:15px">61.7</div>
<div class="c" style="left:444px;top:378px;height:15px;line-height:15px">-29.3</div>
<div class="c" style="left:506px;top:378px;height:15px;line-height:15px">0.27</div>
<div class="abs bar" style="left:579px;top:381px;width:11px;height:10px;background:rgb(128,0,128)"></div>
<div class="abs" style="left:18px;top:393px;width:561px;height:14px;background:#ece9d8"></div>
<div class="c" style="left:-14px;top:393px;height:14px;line-height:14px">21</div>
<div class="c" style="left:28px;top:393px;height:14px;line-height:14px">255</div>
<div class="c" style="left:70px;top:393px;height:14px;line-height:14px">0</div>
<div class="c" style="left:112px;top:393px;height:14px;line-height:14px">255</div>
<div class="c" style="left:174px;top:393px;height:14px;line-height:14px">65.1</div>
<div class="c" style="left:226px;top:393px;height:14px;line-height:14px">107.6</div>
<div class="c" style="left:278px;top:393px;height:14px;line-height:14px">-50.8</div>
<div class="c" style="left:340px;top:393px;height:14px;line-height:14px">65.1</div>
<div class="c" style="left:392px;top:393px;height:14px;line-height:14px">107.7</div>
<div class="c" style="left:444px;top:393px;height:14px;line-height:14px">-50.6</div>
<div class="c" style="left:506px;top:393px;height:14px;line-height:14px">0.03</div>
<div class="abs bar" style="left:579px;top:396px;width:1px;height:9px;background:rgb(255,0,255)"></div>
<div class="abs" style="left:18px;top:407px;width:561px;height:15px;background:#fff"></div>
<div class="c" style="left:-14px;top:407px;height:15px;line-height:15px">22</div>
<div class="c" style="left:28px;top:407px;height:15px;line-height:15px">128</div>
<div class="c" style="left:70px;top:407px;height:15px;line-height:15px">128</div>
<div class="c" style="left:112px;top:407px;height:15px;line-height:15px">0</div>
<div class="c" style="left:174px;top:407px;height:15px;line-height:15px">48.9</div>
<div class="c" style="left:226px;top:407px;height:15px;line-height:15px">-10.8</div>
<div class="c" style="left:278px;top:407px;height:15px;line-height:15px">51.3</div>
<div class="c" style="left:340px;top:407px;height:15px;line-height:15px">48.9</div>
<div class="c" style="left:392px;top:407px;height:15px;line-height:15px">-9.8</div>
<div class="c" style="left:444px;top:407px;height:15px;line-height:15px">51.4</div>
<div class="c" style="left:506px;top:407px;height:15px;line-height:15px">0.30</div>
<div class="abs bar" style="left:579px;top:410px;width:13px;height:10px;background:rgb(128,128,0)"></div>
<div class="abs" style="left:18px;top:422px;width:561px;height:14px;background:#ece9d8"></div>
<div class="c" style="left:-14px;top:422px;height:14px;line-height:14px">23</div>
<div class="c" style="left:28px;top:422px;height:14px;line-height:14px">255</div>
<div class="c" style="left:70px;top:422px;height:14px;line-height:14px">255</div>
<div class="c" style="left:112px;top:422px;height:14px;line-height:14px">0</div>
<div class="c" style="left:174px;top:422px;height:14px;line-height:14px">97.7</div>
<div class="c" style="left:226px;top:422px;height:14px;line-height:14px">-14.4</div>
<div class="c" style="left:278px;top:422px;height:14px;line-height:14px">92.8</div>
<div class="c" style="left:340px;top:422px;height:14px;line-height:14px">97.7</div>
<div class="c" style="left:392px;top:422px;height:14px;line-height:14px">-15.2</div>
<div class="c" style="left:444px;top:422px;height:14px;line-height:14px">92.8</div>
<div class="c" style="left:506px;top:422px;height:14px;line-height:14px">0.15</div>
<div class="abs bar" style="left:579px;top:425px;width:6px;height:9px;background:rgb(255,255,0)"></div>

 <!-- group box -->
 <div class="grp" style="left:16px;top:446px;width:773px;height:177px"></div>
 <div class="t" style="left:26px;top:456px">Profil:</div><div class="t" style="left:61px;top:456px;letter-spacing:-.1px">26-Okt-08 D65 L 101 cdmÂ².icm</div>
 <div class="tc" style="left:132px;top:477px">Sollwert</div><div class="tc" style="left:218px;top:477px">Messwert</div>
 <div class="t" style="left:68px;top:499px">• Weißpunkt:</div><div class="tc" style="left:132px;top:499px">D65</div><div class="tc" style="left:218px;top:499px">Δa -1.0, Δb 0.2</div>
 <div class="t" style="left:68px;top:519px">• Tonwertkurve:</div><div class="tc" style="left:132px;top:519px">L*</div><div class="tc" style="left:218px;top:519px">-</div>
 <div class="t" style="left:68px;top:539px">• Leuchtdichte:</div>
 <div class="t" style="left:76px;top:559px">Weiß:</div><div class="tc" style="left:132px;top:559px">101 cd/m²</div><div class="tc" style="left:218px;top:559px">101 cd/m²</div>
 <div class="t" style="left:76px;top:579px">Schwarz:</div><div class="tc" style="left:132px;top:579px">0.30 cd/m²</div><div class="tc" style="left:218px;top:579px">0.30 cd/m²</div>
 <div class="t" style="left:76px;top:599px">Kontrast:</div><div class="tc" style="left:132px;top:599px">-</div><div class="tc" style="left:218px;top:599px">331 : 1</div>
 <div class="abs" style="left:325px;top:476px;width:2px;height:137px;border-left:1px solid #aca899;border-right:1px solid #fff"></div>
 <div class="t" style="left:456px;top:477px">ΔE<span class="sub">94</span></div>
 <div class="t" style="left:335px;top:499px">• Durchschnitt:</div><div class="t" style="left:456px;top:499px">0.38</div>
 <div class="t" style="left:335px;top:519px">• Maximum:</div><div class="t" style="left:456px;top:519px">1.55</div>
 <div class="t" style="left:335px;top:539px">• Standardabweichung:</div><div class="t" style="left:456px;top:539px">0.37</div>
 <div class="btn def" style="left:708px;top:630px">OK</div>
</div>
</body></html>
